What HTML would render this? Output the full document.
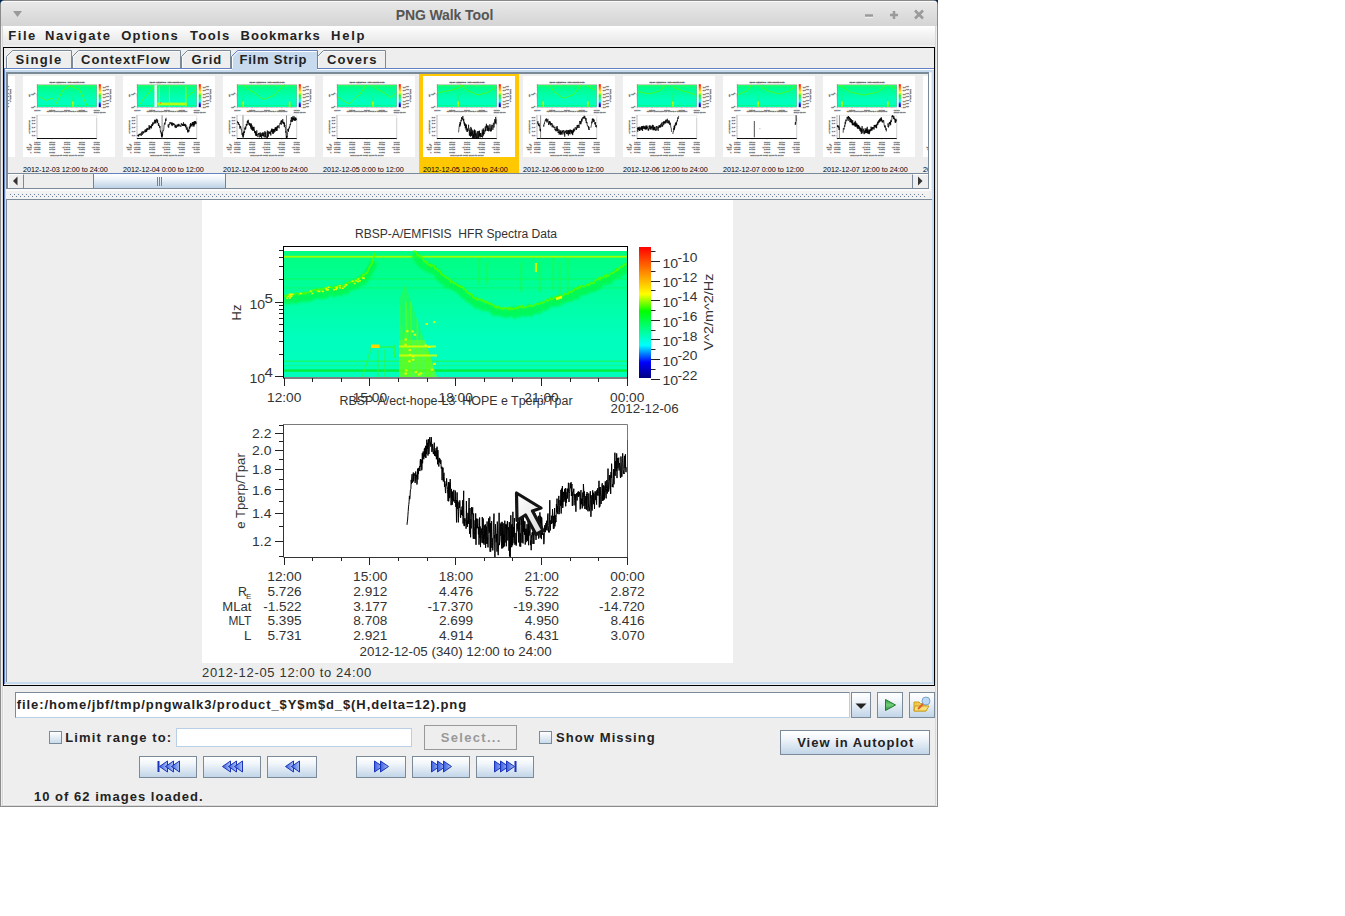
<!DOCTYPE html><html><head><meta charset="utf-8"><title>PNG Walk Tool</title><style>
*{margin:0;padding:0;box-sizing:border-box}
html,body{width:1345px;height:916px;overflow:hidden;background:#fff;position:relative;font-family:"Liberation Sans",sans-serif}
.a{position:absolute}
.b{font-weight:bold;font-size:13px;color:#222;letter-spacing:0.8px;white-space:nowrap;line-height:1}
.pt{font-family:"Liberation Sans",sans-serif;font-size:12px;fill:var(--tf,#333)}
.pts{font-family:"Liberation Sans",sans-serif;font-size:8px;fill:var(--tf,#333)}
.btn{position:absolute;border:1px solid #7a8a99;background:linear-gradient(#fff 0%,#f3f7fb 30%,#c2d5e8 100%)}
.tab{position:absolute;top:50px;height:18px;border:1px solid #7a8a99;border-bottom:none;background:#eee}
</style></head><body>
<div class="a" style="left:0;top:0;width:938px;height:807px;background:#eee;border:1px solid #8c8c8c;border-top-color:#888;border-radius:4px 4px 0 0"></div>
<svg class="a" style="left:0;top:0" width="938" height="6"><path d="M0,0 H4.5 Q0.5,0.5 0,4.5z" fill="#012a52"/><path d="M938,0 H933.5 Q937.5,0.5 938,4.5z" fill="#012a52"/></svg>
<div class="a" style="left:1px;top:1px;width:936px;height:25px;background:linear-gradient(#e8e8e8,#d4d4d4);border-top:1px solid #fafafa;border-radius:3px 3px 0 0"></div>
<div class="a" style="left:2px;top:26px;width:1px;height:779px;background:#d8d8d8"></div>
<div class="a" style="left:3px;top:686px;width:1px;height:118px;background:#f4f4f4"></div>
<div class="a" style="left:2px;top:805px;width:934px;height:1px;background:#d8d8d8"></div>
<div class="a" style="left:3px;top:804px;width:932px;height:1px;background:#f4f4f4"></div>
<div class="a" style="left:935px;top:26px;width:1px;height:779px;background:#d8d8d8"></div>
<svg class="a" style="left:0;top:0" width="938" height="26"><path d="M13,11 L22,11 L17.5,17z" fill="#9a9a9a"/><path d="M865,16.5H873" stroke="#fff" stroke-width="2.5" opacity=".7"/><path d="M865,15.5H873" stroke="#9a9a9a" stroke-width="2.5"/><path d="M890,15H898M894,11V19" stroke="#9a9a9a" stroke-width="2.5"/><path d="M915,10.5L923,18.5M923,10.5L915,18.5" stroke="#9a9a9a" stroke-width="2.5"/></svg>
<div class="a" style="left:395.7px;top:8.3px;font-size:14px;font-weight:bold;color:#555;white-space:nowrap;line-height:14px;letter-spacing:-0.1px">PNG Walk Tool</div>
<div class="a" style="left:3px;top:26px;width:932px;height:19px;background:linear-gradient(#ffffff,#f4f4f4 40%,#e6e6e6)"></div>
<div class="a b" style="left:8.2px;top:29px;letter-spacing:1.57px">File</div>
<div class="a b" style="left:45.1px;top:29px;letter-spacing:1.54px">Navigate</div>
<div class="a b" style="left:121.2px;top:29px;letter-spacing:1.23px">Options</div>
<div class="a b" style="left:190.1px;top:29px;letter-spacing:1.38px">Tools</div>
<div class="a b" style="left:240.6px;top:29px;letter-spacing:1.04px">Bookmarks</div>
<div class="a b" style="left:331.1px;top:29px;letter-spacing:1.73px">Help</div>
<div class="a" style="left:3px;top:47px;width:932px;height:639px;border:1px solid #000;background:#eee"></div>
<svg class="a" style="left:6px;top:49px" width="67" height="20"><path d="M0.5,20 V7.5 L6.5,1.5 H65.5 V20" fill="#eee" stroke="#7a8a99" stroke-width="1"/><path d="M1.5,20 V8 L7,2.5 H64.5" fill="none" stroke="#fafafa" stroke-width="1"/></svg>
<svg class="a" style="left:72px;top:49px" width="110" height="20"><path d="M0.5,20 V7.5 L6.5,1.5 H108.5 V20" fill="#eee" stroke="#7a8a99" stroke-width="1"/><path d="M1.5,20 V8 L7,2.5 H107.5" fill="none" stroke="#fafafa" stroke-width="1"/></svg>
<svg class="a" style="left:181px;top:49px" width="51" height="20"><path d="M0.5,20 V7.5 L6.5,1.5 H49.5 V20" fill="#eee" stroke="#7a8a99" stroke-width="1"/><path d="M1.5,20 V8 L7,2.5 H48.5" fill="none" stroke="#fafafa" stroke-width="1"/></svg>
<svg class="a" style="left:317px;top:49px" width="70" height="20"><path d="M0.5,20 V7.5 L6.5,1.5 H68.5 V20" fill="#eee" stroke="#7a8a99" stroke-width="1"/><path d="M1.5,20 V8 L7,2.5 H67.5" fill="none" stroke="#fafafa" stroke-width="1"/></svg>
<svg class="a" style="left:231px;top:49px" width="87" height="24"><path d="M0.5,24 V7.5 L6.5,1.5 H86.5 V24" fill="#c7daee" stroke="#6382bf" stroke-width="1"/><path d="M1.5,22 V8 L7,2.5 H85.5" fill="none" stroke="#fff" stroke-width="1"/></svg>
<div class="a" style="left:4px;top:68px;width:930px;height:616px;border:1px solid #6382bf;border-right:none;border-bottom:none"></div>
<div class="a" style="left:5px;top:69px;width:929px;height:615px;border:1px solid #fff;border-right:none;border-bottom:none"></div>
<div class="a" style="left:5px;top:70px;width:929px;height:614px;border:2px solid #c7daee;border-left-width:1px;border-top-width:2px"></div>
<div class="a" style="left:232px;top:68px;width:85px;height:4px;background:#c7daee"></div>
<div class="a" style="left:317px;top:68px;width:1px;height:1px;background:#6382bf"></div>
<div class="a b" style="left:15.4px;top:53px;letter-spacing:1.36px">Single</div>
<div class="a b" style="left:81px;top:53px;letter-spacing:1.05px">ContextFlow</div>
<div class="a b" style="left:191.6px;top:53px;letter-spacing:0.97px">Grid</div>
<div class="a b" style="left:239.4px;top:53px;letter-spacing:0.8px">Film Strip</div>
<div class="a b" style="left:327px;top:53px;letter-spacing:1.06px">Covers</div>
<div class="a" style="left:6px;top:72px;width:923px;height:117px;border:2px solid #7a8a99;border-right-width:1px;border-bottom-width:1px;background:#eee"></div>
<div class="a" style="left:8px;top:74px;width:920px;height:99px;overflow:hidden">
<svg class="a" style="left:-85px;top:2px" width="92" height="81" viewBox="202 200 531 463" preserveAspectRatio="none"><use href="#pbase" stroke="#666" stroke-width="2" style="--tf:#555"/><g clip-path="url(#specclip)"><rect x="284" y="255.8" width="343" height="1.8" fill="#9cff00"/>
<rect x="284" y="369.3" width="343" height="2.5" fill="#00f030" opacity=".9"/>
<path d="M284.00,288.8 L288.00,288.5 L292.00,288.1 L296.00,287.7 L300.00,287.3 L304.00,286.9 L308.00,286.4 L312.00,285.8 L316.00,285.3 L320.00,284.7 L324.00,284.1 L328.00,283.5 L332.00,282.9 L336.00,282.2 L340.00,281.5 L344.00,280.8 L348.00,280.1 L352.00,279.4 L356.00,278.7 L360.00,278.0 L364.00,277.3 L368.00,276.5 L372.00,275.8 L376.00,275.1 L380.00,274.3 L384.00,273.6 L388.00,272.9 L392.00,272.2 L396.00,271.5 L400.00,270.8 L404.00,270.1 L408.00,269.5 L412.00,268.8 L416.00,268.2 L420.00,267.6 L424.00,267.0 L428.00,266.5 L432.00,266.0 L436.00,265.5 L440.00,265.0 L444.00,264.6 L448.00,264.2 L452.00,263.9 L456.00,263.6 L460.00,264.0 L464.00,264.3 L468.00,264.7 L472.00,265.1 L476.00,265.6 L480.00,266.1 L484.00,266.6 L488.00,267.2 L492.00,267.8 L496.00,268.4 L500.00,269.0 L504.00,269.6 L508.00,270.3 L512.00,271.0 L516.00,271.6 L520.00,272.3 L524.00,273.1 L528.00,273.8 L532.00,274.5 L536.00,275.2 L540.00,276.0 L544.00,276.7 L548.00,277.4 L552.00,278.2 L556.00,278.9 L560.00,279.6 L564.00,280.3 L568.00,281.0 L572.00,281.7 L576.00,282.4 L580.00,283.0 L584.00,283.7 L588.00,284.3 L592.00,284.9 L596.00,285.4 L600.00,286.0 L604.00,286.5 L608.00,287.0 L612.00,287.4 L616.00,287.8 L620.00,288.2 L624.00,288.6" fill="none" stroke="#60f800" stroke-width="5" stroke-linejoin="round"/>
<path d="M448.5,377 L455.5,301.4 L462.5,377z" fill="#40f020" opacity=".55"/>
<rect x="451.5" y="345" width="9" height="32" fill="#b8ff00" opacity=".8"/>
<rect x="452.5" y="350" width="6" height="8" fill="#f0f000"/></g><use href="#paxes" stroke="#777" stroke-width="2" style="--tf:#555"/><path d="M283,557H627" stroke="#111" stroke-width="6"/><path d="" fill="none" stroke="#777" stroke-width="5"/><path d="" fill="none" stroke="#000" stroke-width="4" clip-path="url(#lineclip)"/></svg>
<div class="a" style="left:-85px;top:92px;font-size:7.2px;color:#000;white-space:nowrap;line-height:1;letter-spacing:0px">2012-12-03 0:00 to 12:00</div>
<svg class="a" style="left:15px;top:2px" width="92" height="81" viewBox="202 200 531 463" preserveAspectRatio="none"><use href="#pbase" stroke="#666" stroke-width="2" style="--tf:#555"/><g clip-path="url(#specclip)"><rect x="284" y="255.8" width="343" height="1.8" fill="#9cff00"/>
<rect x="284" y="369.3" width="343" height="2.5" fill="#00f030" opacity=".9"/>
<path d="M386.90,364.4 L390.90,360.2 L394.90,354.7 L398.90,348.0 L402.90,340.5 L406.90,332.4 L410.90,324.0 L414.90,315.4 L418.90,307.0 L422.90,299.0 L426.90,291.6 L430.90,285.1 L434.90,279.7 L438.90,276.0 L442.90,274.5 L446.90,272.4 L450.90,269.9 L454.90,267.2 L458.90,264.4 L462.90,261.8 L466.90,259.6 L470.90,257.9 L474.90,257.8 L478.90,258.8 L482.90,260.2 L486.90,261.7 L490.90,263.4 L494.90,265.2 L498.90,267.0 L502.90,268.8 L506.90,270.6 L510.90,272.2 L514.90,273.7 L518.90,275.0 L522.90,276.0 L526.90,279.2 L530.90,284.7 L534.90,291.5 L538.90,299.3 L542.90,307.8 L546.90,316.8 L550.90,325.9 L554.90,335.0 L558.90,343.8 L562.90,351.9 L566.90,359.2 L570.90,365.3 L574.90,370.1" fill="none" stroke="#60f800" stroke-width="5" stroke-linejoin="round"/>
<path d="M301.15,320.3 L305.15,321.8 L309.15,323.8 L313.15,326.3 L317.15,329.0 L321.15,331.7 L325.15,334.3 L329.15,336.6 L333.15,338.4 L337.15,338.8 L341.15,337.7 L345.15,336.2 L349.15,334.5 L353.15,332.6 L357.15,330.8 L361.15,329.2 L365.15,327.8 L369.15,326.7 L373.15,329.4 L377.15,334.4 L381.15,339.9 L385.15,344.3" fill="none" stroke="#60f800" stroke-width="5" stroke-linejoin="round"/>
<path d="M482.8,377 L489.8,301.4 L496.8,377z" fill="#40f020" opacity=".55"/>
<rect x="485.8" y="345" width="9" height="32" fill="#b8ff00" opacity=".8"/>
<rect x="486.8" y="350" width="6" height="8" fill="#f0f000"/></g><use href="#paxes" stroke="#777" stroke-width="2" style="--tf:#555"/><path d="M283,557H627" stroke="#111" stroke-width="6"/><path d="" fill="none" stroke="#777" stroke-width="5"/><path d="" fill="none" stroke="#000" stroke-width="4" clip-path="url(#lineclip)"/></svg>
<div class="a" style="left:15px;top:92px;font-size:7.2px;color:#000;white-space:nowrap;line-height:1;letter-spacing:0px">2012-12-03 12:00 to 24:00</div>
<svg class="a" style="left:115px;top:2px" width="92" height="81" viewBox="202 200 531 463" preserveAspectRatio="none"><use href="#pbase" stroke="#666" stroke-width="2" style="--tf:#555"/><g clip-path="url(#specclip)"><rect x="284" y="255.8" width="343" height="1.8" fill="#9cff00"/>
<rect x="284" y="369.3" width="343" height="2.5" fill="#00f030" opacity=".9"/>
<path d="M294.29,364.4 L298.29,361.3 L302.29,357.0 L306.29,351.9 L310.29,346.1 L314.29,340.1 L318.29,334.0 L322.29,328.1 L326.29,322.8 L330.29,318.2 L334.29,314.8 L338.29,312.0 L342.29,308.4 L346.29,303.9 L350.29,298.8 L354.29,293.2 L358.29,287.4 L362.29,281.5 L366.29,275.7 L370.29,270.3 L374.29,265.4 L378.29,261.3 L382.29,258.0" fill="none" stroke="#60f800" stroke-width="5" stroke-linejoin="round"/>
<path d="M558.40,326.6 L562.40,324.7 L566.40,321.9 L570.40,318.6 L574.40,315.1 L578.40,311.4 L582.40,307.9 L586.40,304.8 L590.40,302.4 L594.40,300.7 L598.40,298.4 L602.40,295.4 L606.40,291.9 L610.40,288.3 L614.40,284.7 L618.40,281.3 L622.40,278.5 L626.40,276.4" fill="none" stroke="#60f800" stroke-width="5" stroke-linejoin="round"/>
<rect x="383.5" y="247" width="13.7" height="130" fill="#fff"/>
<rect x="400" y="352" width="170" height="16" fill="#c8ff00" opacity=".9"/>
<rect x="410" y="350" width="12" height="8" fill="#ff8000"/>
<path d="M412,260V377 M470,260V377 M565,260V377" stroke="#a0ff00" stroke-width="6"/></g><use href="#paxes" stroke="#777" stroke-width="2" style="--tf:#555"/><path d="M283,557H627" stroke="#111" stroke-width="6"/><path d=" M427.5,425 V557" fill="none" stroke="#777" stroke-width="5"/><path d="M283.00,537.6 L284.00,541.0 L285.00,538.1 L286.00,537.8 L287.00,537.9 L288.00,537.0 L289.00,541.2 L290.00,538.6 L291.00,545.8 L292.00,535.4 L293.00,544.1 L294.00,532.6 L295.00,531.7 L296.00,530.2 L297.00,534.7 L298.00,531.9 L299.00,537.4 L300.00,534.5 L301.00,536.0 L302.00,538.1 L303.00,530.2 L304.00,529.8 L305.00,528.6 L306.00,527.2 L307.00,542.3 L308.00,530.0 L309.00,523.8 L310.00,525.1 L311.00,518.2 L312.00,531.6 L313.00,536.9 L314.00,528.2 L315.00,527.0 L316.00,521.1 L317.00,515.4 L318.00,529.5 L319.00,524.6 L320.00,517.9 L321.00,526.2 L322.00,525.1 L323.00,521.1 L324.00,523.1 L325.00,521.5 L326.00,513.3 L327.00,513.2 L328.00,516.2 L329.00,516.2 L330.00,506.0 L331.00,521.9 L332.00,513.4 L333.00,517.9 L334.00,504.8 L335.00,509.3 L336.00,515.4 L337.00,520.3 L338.00,504.9 L339.00,516.9 L340.00,498.5 L341.00,496.5 L342.00,509.6 L343.00,501.1 L344.00,499.8 L345.00,505.1 L346.00,500.0 L347.00,508.8 L348.00,502.8 L349.00,498.9 L350.00,495.2 L351.00,493.2 L352.00,490.7 L353.00,480.5 L354.00,500.5 L355.00,491.5 L356.00,506.5 L357.00,496.5 L358.00,486.4 L359.00,498.0 L360.00,486.2 L361.00,488.5 L362.00,493.2 L363.00,485.6 L364.00,493.1 L365.00,482.9 L366.00,499.5 L367.00,493.0 L368.00,479.0 L369.00,474.4 L370.00,484.8 L371.00,478.7 L372.00,485.5 L373.00,465.6 L374.00,473.8 L375.00,480.7 L376.00,471.8 L377.00,470.0 L378.00,470.5 L379.00,472.9 L380.00,464.8 L381.00,471.3 L382.00,472.3 L383.00,457.7 L384.00,456.2 L385.00,450.1 L386.00,469.4 L387.00,453.9 L388.00,467.0 L389.00,452.0 L390.00,458.6 L391.00,469.6 L392.00,471.2 L393.00,453.0 L394.00,444.8 L395.00,449.6 L396.00,449.6 L397.00,461.5 L398.00,455.5 L399.00,447.4 L400.00,466.8 L401.00,468.8 L402.00,452.9 L403.00,467.0 L404.00,468.1 L405.00,473.3 L406.00,480.7 L407.00,485.8 L408.00,469.9 L409.00,482.7 L410.00,485.6 L411.00,481.5 L412.00,483.7 L413.00,496.1 L414.00,490.1 L415.00,492.4 L416.00,487.1 L417.00,505.9 L418.00,518.8 L419.00,513.2 L420.00,524.0 L421.00,526.1 L422.00,528.0 L423.00,523.5 L424.00,546.8 L425.00,547.0 L426.00,523.0 L427.00,549.9 L428.00,540.1 L429.00,532.8 L430.00,542.5 L431.00,518.9 L432.00,513.3 L433.00,513.7 L434.00,514.6 L435.00,509.0 L436.00,510.1 L437.00,508.1 L438.00,496.4 L439.00,480.9 L440.00,478.4 L441.00,471.9 L442.00,466.8 L443.00,477.1 L444.00,474.8 L445.00,475.8 L446.00,468.2 L447.00,463.7 L448.00,445.2 L449.00,450.7 L450.00,457.1 L451.00,438.2 M461.88,492.2 L462.88,477.4 L463.88,483.7 L464.88,491.4 L465.88,495.6 L466.88,482.6 L467.88,475.9 L468.88,480.7 L469.88,471.2 L470.88,468.0 L471.88,465.4 L472.88,464.8 L473.88,472.6 L474.88,472.1 L475.88,473.1 L476.88,463.9 L477.88,465.3 L478.88,466.2 L479.88,470.4 L480.88,478.0 L481.88,468.1 L482.88,471.3 L483.88,480.9 L484.88,464.9 L485.88,486.5 L486.88,475.9 L487.88,470.0 L488.88,471.2 L489.88,477.5 L490.88,472.8 L491.88,469.8 L492.88,474.4 L493.88,479.4 L494.88,471.5 L495.88,480.0 L496.88,481.9 L497.88,476.5 L498.88,475.6 L499.88,473.9 L500.88,482.6 L501.88,493.9 L502.88,484.3 L503.88,484.8 L504.88,489.6 L505.88,479.4 L506.88,497.8 L507.88,485.7 L508.88,488.9 L509.88,488.7 L510.88,495.5 L511.88,490.6 L512.88,480.3 L513.88,478.4 L514.88,487.7 L515.88,477.9 L516.88,477.0 L517.88,479.0 L518.88,490.2 L519.88,481.1 L520.88,486.0 L521.88,485.3 L522.88,475.6 L523.88,486.4 L524.88,473.3 L525.88,475.7 L526.88,487.7 L527.88,486.7 L528.88,484.9 L529.88,486.0 L530.88,484.5 L531.88,480.2 L532.88,484.0 L533.88,484.6 L534.88,485.9 L535.88,490.8 L536.88,485.7 L537.88,473.4 L538.88,469.7 L539.88,476.6 L540.88,477.1 L541.88,480.5 L542.88,475.6 L543.88,482.9 L544.88,485.8 L545.88,475.4 L546.88,481.3 L547.88,475.9 L548.88,485.3 L549.88,470.2 L550.88,464.4 L551.88,486.0 L552.88,482.5 L553.88,477.6 L554.88,478.3 L555.88,483.8 L556.88,473.7 L557.88,486.2 L558.88,485.7 L559.88,475.0 L560.88,473.6 L561.88,476.7 L562.88,493.0 L563.88,477.8 L564.88,486.2 L565.88,482.7 L566.88,496.8 L567.88,507.4 L568.88,504.2 L569.88,495.4 L570.88,489.7 L571.88,499.2 L572.88,497.3 L573.88,496.6 L574.88,517.8 L575.88,508.5 L576.88,523.6 L577.88,505.0 L578.88,515.6 L579.88,511.7 L580.88,516.3 L581.88,510.8 L582.88,517.5 L583.88,500.2 L584.88,488.9 L585.88,501.3 L586.88,491.6 L587.88,499.5 L588.88,497.0 L589.88,475.6 L590.88,492.1 L591.88,469.3 L592.88,480.5 L593.88,474.2 L594.88,480.3 L595.88,483.1 L596.88,477.2 L597.88,488.0 L598.88,483.2 L599.88,472.0 L600.88,480.0 L601.88,464.6 L602.88,475.7 L603.88,480.8 L604.88,463.7 L605.88,488.8 L606.88,482.3 L607.88,463.3 L608.88,465.8 L609.88,482.4 L610.88,462.0 L611.88,488.8 L612.88,464.5 L613.88,458.6 L614.88,465.4 L615.88,479.5 L616.88,459.7 L617.88,465.5 L618.88,469.9 L619.88,458.0 L620.88,472.2 L621.88,466.8 L622.88,471.4 L623.88,461.2 L624.88,465.1 L625.88,467.5 L626.88,475.7" fill="none" stroke="#000" stroke-width="4" clip-path="url(#lineclip)"/></svg>
<div class="a" style="left:115px;top:92px;font-size:7.2px;color:#000;white-space:nowrap;line-height:1;letter-spacing:0px">2012-12-04 0:00 to 12:00</div>
<svg class="a" style="left:215px;top:2px" width="92" height="81" viewBox="202 200 531 463" preserveAspectRatio="none"><use href="#pbase" stroke="#666" stroke-width="2" style="--tf:#555"/><g clip-path="url(#specclip)"><rect x="284" y="255.8" width="343" height="1.8" fill="#9cff00"/>
<rect x="284" y="369.3" width="343" height="2.5" fill="#00f030" opacity=".9"/>
<path d="M318.30,251.0 L322.30,252.8 L326.30,255.2 L330.30,258.0 L334.30,261.2 L338.30,264.7 L342.30,268.3 L346.30,272.0 L350.30,275.6 L354.30,279.0 L358.30,282.2 L362.30,285.0 L366.30,287.3 L370.30,289.0 L374.30,290.5 L378.30,292.5 L382.30,294.8 L386.30,297.4 L390.30,300.2 L394.30,303.1 L398.30,306.3 L402.30,309.4 L406.30,312.7 L410.30,315.8 L414.30,318.9 L418.30,321.9 L422.30,324.7 L426.30,327.2 L430.30,329.5 L434.30,331.4 L438.30,332.9 L442.30,332.0 L446.30,330.8 L450.30,329.4 L454.30,327.8 L458.30,326.1 L462.30,324.3 L466.30,322.4 L470.30,320.6 L474.30,318.9 L478.30,317.3 L482.30,315.9 L486.30,314.8 L490.30,313.8 L494.30,311.5 L498.30,308.8 L502.30,305.5 L506.30,301.8 L510.30,297.8 L514.30,293.6 L518.30,289.1 L522.30,284.6 L526.30,280.0 L530.30,275.4 L534.30,271.0 L538.30,266.8 L542.30,262.8 L546.30,259.2 L550.30,255.9 L554.30,253.2 L558.30,251.0" fill="none" stroke="#60f800" stroke-width="5" stroke-linejoin="round"/>
<path d="M311.3,377 L318.3,288.8 L325.3,377z" fill="#40f020" opacity=".55"/>
<rect x="314.3" y="345" width="9" height="32" fill="#b8ff00" opacity=".8"/>
<rect x="315.3" y="350" width="6" height="8" fill="#f0f000"/>
<path d="M578.8,377 L585.8,314.0 L592.8,377z" fill="#40f020" opacity=".55"/>
<rect x="581.8" y="345" width="9" height="32" fill="#b8ff00" opacity=".8"/>
<rect x="582.8" y="350" width="6" height="8" fill="#f0f000"/></g><use href="#paxes" stroke="#777" stroke-width="2" style="--tf:#555"/><path d="M283,557H627" stroke="#111" stroke-width="6"/><path d=" M317.4,425 V557 M568.5,425 V557" fill="none" stroke="#777" stroke-width="5"/><path d="M283.00,464.8 L284.00,456.6 L285.00,458.6 L286.00,468.7 L287.00,464.5 L288.00,463.7 L289.00,464.8 L290.00,477.4 L291.00,464.1 L292.00,465.4 L293.00,473.4 L294.00,479.9 L295.00,480.3 L296.00,480.2 L297.00,475.5 L298.00,492.4 L299.00,492.7 L300.00,501.3 L301.00,484.6 L302.00,486.9 L303.00,495.3 L304.00,488.5 L305.00,495.8 L306.00,495.3 L307.00,506.4 L308.00,503.9 L309.00,508.2 L310.00,520.3 L311.00,533.3 L312.00,536.8 L313.00,535.9 L314.00,525.4 L315.00,527.6 L316.00,545.4 L317.00,537.9 L318.00,535.5 L319.00,551.0 L320.00,521.6 L321.00,532.0 L322.00,538.4 L323.00,514.0 L324.00,517.4 L325.00,520.3 L326.00,525.9 L327.00,512.7 L328.00,496.0 L329.00,507.1 L330.00,496.1 L331.00,488.9 L332.00,500.6 L333.00,503.8 L334.00,496.5 L335.00,496.5 L336.00,474.5 L337.00,479.0 L338.00,477.6 L339.00,485.6 L340.00,473.7 L341.00,479.8 L342.00,459.1 L343.00,467.9 L344.00,462.5 L345.00,455.0 L346.00,470.9 L347.00,454.6 L348.00,450.5 L349.00,464.7 L350.00,470.1 L351.00,466.3 L352.00,478.9 L353.00,471.3 L354.00,477.7 L355.00,469.6 L356.00,481.9 L357.00,470.9 L358.00,485.1 L359.00,476.8 L360.00,478.3 L361.00,493.5 L362.00,491.5 L363.00,470.7 L364.00,503.2 L365.00,473.3 L366.00,487.7 L367.00,488.2 L368.00,507.2 L369.00,507.9 L370.00,482.7 L371.00,509.8 L372.00,511.6 L373.00,492.1 L374.00,492.4 L375.00,491.9 L376.00,513.6 L377.00,491.3 L378.00,507.2 L379.00,507.1 L380.00,510.9 L381.00,490.3 L382.00,512.3 L383.00,507.7 L384.00,525.3 L385.00,524.4 L386.00,514.8 L387.00,522.4 L388.00,516.3 L389.00,534.5 L390.00,515.5 L391.00,530.5 L392.00,542.1 L393.00,522.9 L394.00,540.7 L395.00,532.3 L396.00,543.6 L397.00,510.6 L398.00,538.2 L399.00,534.2 L400.00,531.8 L401.00,539.8 L402.00,543.0 L403.00,549.1 L404.00,548.0 L405.00,542.4 L406.00,535.0 L407.00,527.5 L408.00,535.3 L409.00,529.7 L410.00,532.5 L411.00,525.0 L412.00,551.4 L413.00,549.9 L414.00,547.1 L415.00,544.6 L416.00,529.6 L417.00,522.8 L418.00,548.6 L419.00,531.9 L420.00,545.2 L421.00,545.8 L422.00,525.3 L423.00,531.5 L424.00,533.1 L425.00,560.6 L426.00,538.0 L427.00,538.2 L428.00,534.3 L429.00,542.7 L430.00,524.8 L431.00,530.7 L432.00,522.6 L433.00,543.5 L434.00,527.4 L435.00,542.6 L436.00,544.4 L437.00,529.6 L438.00,523.0 L439.00,528.4 L440.00,550.9 L441.00,539.8 L442.00,540.0 L443.00,527.1 L444.00,515.1 L445.00,530.0 L446.00,525.5 L447.00,551.0 L448.00,530.3 L449.00,520.7 L450.00,531.2 L451.00,542.7 L452.00,548.6 L453.00,549.9 L454.00,553.9 L455.00,546.8 L456.00,547.3 L457.00,541.4 L458.00,511.4 L459.00,555.7 L460.00,539.7 L461.00,542.5 L462.00,516.4 L463.00,547.3 L464.00,537.1 L465.00,518.7 L466.00,517.7 L467.00,520.3 L468.00,526.2 L469.00,519.2 L470.00,521.7 L471.00,529.0 L472.00,520.3 L473.00,520.6 L474.00,533.0 L475.00,516.7 L476.00,521.2 L477.00,527.5 L478.00,539.9 L479.00,526.7 L480.00,509.6 L481.00,518.2 L482.00,519.4 L483.00,501.7 L484.00,518.4 L485.00,511.8 L486.00,501.5 L487.00,514.3 L488.00,528.8 L489.00,506.3 L490.00,523.1 L491.00,525.8 L492.00,531.2 L493.00,526.4 L494.00,503.6 L495.00,523.1 L496.00,503.0 L497.00,522.9 L498.00,521.3 L499.00,509.7 L500.00,502.9 L501.00,503.4 L502.00,519.8 L503.00,494.3 L504.00,509.9 L505.00,494.1 L506.00,510.0 L507.00,497.2 L508.00,504.9 L509.00,493.3 L510.00,510.8 L511.00,507.8 L512.00,514.3 L513.00,491.6 L514.00,512.3 L515.00,485.3 L516.00,493.0 L517.00,487.7 L518.00,495.6 L519.00,490.9 L520.00,481.8 L521.00,486.1 L522.00,491.6 L523.00,490.7 L524.00,492.9 L525.00,496.5 L526.00,498.8 L527.00,481.0 L528.00,481.5 L529.00,480.3 L530.00,471.8 L531.00,472.9 L532.00,467.5 L533.00,471.0 L534.00,475.4 L535.00,464.4 L536.00,462.0 L537.00,455.5 L538.00,466.8 L539.00,478.5 L540.00,453.2 L541.00,463.1 L542.00,457.9 L543.00,462.1 L544.00,467.4 L545.00,467.1 L546.00,449.2 L547.00,445.7 L548.00,457.0 L549.00,473.1 L550.00,463.1 L551.00,474.1 L552.00,471.7 L553.00,462.1 L554.00,475.3 L555.00,479.9 L556.00,491.6 L557.00,467.1 L558.00,479.6 L559.00,484.8 L560.00,480.7 L561.00,494.3 L562.00,492.1 L563.00,513.5 L564.00,523.5 L565.00,516.2 L566.00,540.3 L567.00,549.1 L568.00,559.8 L569.00,542.7 L570.00,558.7 L571.00,542.1 L572.00,551.0 L573.00,543.3 L574.00,537.6 L575.00,520.6 L576.00,518.5 L577.00,502.4 L578.00,514.4 L579.00,502.6 L580.00,518.2 L581.00,501.0 L582.00,498.2 L583.00,496.6 L584.00,500.8 L585.00,489.1 L586.00,495.7 L587.00,490.8 L588.00,489.3 L589.00,475.2 L590.00,473.7 L591.00,480.8 L592.00,477.2 L593.00,468.7 L594.00,451.0 L595.00,462.1 L596.00,438.0 L597.00,443.2 L598.00,436.6 L599.00,439.8 L600.00,461.6 L601.00,436.0 L602.00,461.3 L603.00,441.0 L604.00,440.9 L605.00,444.5 L606.00,429.1 L607.00,433.3 L608.00,448.4 L609.00,441.0 L610.00,451.2 L611.00,446.3 L612.00,456.0 L613.00,431.0 L614.00,451.6 L615.00,452.4 L616.00,454.4 L617.00,439.8 L618.00,442.1 L619.00,455.4 L620.00,439.5 L621.00,452.9 L622.00,436.6 L623.00,452.9 L624.00,453.0 L625.00,445.2 L626.00,451.2 L627.00,440.6" fill="none" stroke="#000" stroke-width="4" clip-path="url(#lineclip)"/></svg>
<div class="a" style="left:215px;top:92px;font-size:7.2px;color:#000;white-space:nowrap;line-height:1;letter-spacing:0px">2012-12-04 12:00 to 24:00</div>
<svg class="a" style="left:315px;top:2px" width="92" height="81" viewBox="202 200 531 463" preserveAspectRatio="none"><use href="#pbase" stroke="#666" stroke-width="2" style="--tf:#555"/><g clip-path="url(#specclip)"><rect x="284" y="255.8" width="343" height="1.8" fill="#9cff00"/>
<rect x="284" y="369.3" width="343" height="2.5" fill="#00f030" opacity=".9"/>
<path d="M284.00,320.3 L288.00,321.6 L292.00,323.2 L296.00,325.1 L300.00,327.3 L304.00,329.7 L308.00,332.2 L312.00,334.9 L316.00,337.6 L320.00,340.4 L324.00,343.1 L328.00,345.8 L332.00,348.3 L336.00,350.7 L340.00,352.9 L344.00,354.9 L348.00,356.6 L352.00,357.9 L356.00,356.4 L360.00,353.7 L364.00,350.4 L368.00,346.8 L372.00,342.7 L376.00,338.5 L380.00,334.3 L384.00,330.0 L388.00,326.0 L392.00,322.2 L396.00,318.9 L400.00,316.1 L404.00,314.0 L408.00,311.1 L412.00,307.1 L416.00,302.4 L420.00,297.0 L424.00,291.3 L428.00,285.2 L432.00,279.1 L436.00,273.1 L440.00,267.3 L444.00,262.1 L448.00,257.4 L452.00,253.6" fill="none" stroke="#60f800" stroke-width="5" stroke-linejoin="round"/>
<path d="M489.80,257.3 L493.80,258.8 L497.80,260.8 L501.80,263.1 L505.80,265.8 L509.80,268.7 L513.80,271.7 L517.80,274.8 L521.80,277.8 L525.80,280.7 L529.80,283.3 L533.80,285.6 L537.80,287.5 L541.80,289.0 L545.80,290.5 L549.80,292.6 L553.80,295.0 L557.80,297.7 L561.80,300.6 L565.80,303.7 L569.80,306.7 L573.80,309.7 L577.80,312.5 L581.80,315.1 L585.80,317.4 L589.80,319.3 L593.80,319.9 L597.80,317.7 L601.80,314.8 L605.80,311.4 L609.80,307.7 L613.80,304.1 L617.80,300.7 L621.80,297.8 L625.80,295.6" fill="none" stroke="#60f800" stroke-width="5" stroke-linejoin="round"/>
<path d="M482.8,377 L489.8,314.0 L496.8,377z" fill="#40f020" opacity=".55"/>
<rect x="485.8" y="345" width="9" height="32" fill="#b8ff00" opacity=".8"/>
<rect x="486.8" y="350" width="6" height="8" fill="#f0f000"/></g><use href="#paxes" stroke="#777" stroke-width="2" style="--tf:#555"/><path d="M283,557H627" stroke="#111" stroke-width="6"/><path d="" fill="none" stroke="#777" stroke-width="5"/><path d="" fill="none" stroke="#000" stroke-width="4" clip-path="url(#lineclip)"/></svg>
<div class="a" style="left:315px;top:92px;font-size:7.2px;color:#000;white-space:nowrap;line-height:1;letter-spacing:0px">2012-12-05 0:00 to 12:00</div>
<div class="a" style="left:411px;top:0;width:100px;height:99px;background:#ffc800"></div>
<svg class="a" style="left:415px;top:2px" width="92" height="81" viewBox="202 200 531 463" preserveAspectRatio="none"><use href="#pbase" stroke="#666" stroke-width="2" style="--tf:#555"/><g clip-path="url(#specclip)"><rect x="284" y="255.8" width="343" height="1.8" fill="#9cff00"/>
<rect x="284" y="369.3" width="343" height="2.5" fill="#00f030" opacity=".9"/>
<path d="M284.00,296.4 L288.00,295.9 L292.00,295.4 L296.00,294.7 L300.00,294.0 L304.00,293.2 L308.00,292.4 L312.00,291.5 L316.00,290.6 L320.00,289.7 L324.00,288.8 L328.00,287.9 L332.00,287.0 L336.00,286.2 L340.00,285.5 L344.00,284.8 L348.00,284.3 L352.00,283.8 L356.00,283.2 L360.00,282.4 L364.00,281.3 L368.00,280.2 L372.00,278.9 L376.00,277.6 L380.00,276.2 L384.00,274.8 L388.00,273.3 L392.00,271.9 L396.00,270.6 L400.00,269.4 L404.00,268.3 L408.00,267.3 L412.00,266.5 L416.00,265.4 L420.00,262.6 L424.00,259.1 L428.00,255.5 L432.00,252.5" fill="none" stroke="#60f800" stroke-width="5" stroke-linejoin="round"/>
<path d="M414.34,251.0 L418.34,252.6 L422.34,254.6 L426.34,257.0 L430.34,259.7 L434.34,262.6 L438.34,265.7 L442.34,269.0 L446.34,272.2 L450.34,275.4 L454.34,278.4 L458.34,281.3 L462.34,283.9 L466.34,286.1 L470.34,288.0 L474.34,289.2 L478.34,290.4 L482.34,292.0 L486.34,293.8 L490.34,295.8 L494.34,297.9 L498.34,300.0 L502.34,302.1 L506.34,304.0 L510.34,305.6 L514.34,307.0 L518.34,307.6 L522.34,307.0 L526.34,306.3 L530.34,305.4 L534.34,304.4 L538.34,303.4 L542.34,302.4 L546.34,301.3 L550.34,300.3 L554.34,299.4 L558.34,298.6 L562.34,298.0 L566.34,297.3 L570.34,295.9 L574.34,294.1 L578.34,292.0 L582.34,289.7 L586.34,287.2 L590.34,284.6 L594.34,281.8 L598.34,279.1 L602.34,276.4 L606.34,273.7 L610.34,271.2 L614.34,268.9 L618.34,266.9 L622.34,265.2 L626.34,263.8" fill="none" stroke="#60f800" stroke-width="5" stroke-linejoin="round"/>
<path d="M397.1,377 L404.1,283.8 L411.1,377z" fill="#40f020" opacity=".55"/>
<rect x="400.1" y="345" width="9" height="32" fill="#b8ff00" opacity=".8"/>
<rect x="401.1" y="350" width="6" height="8" fill="#f0f000"/></g><use href="#paxes" stroke="#777" stroke-width="2" style="--tf:#555"/><path d="M283,557H627" stroke="#111" stroke-width="6"/><path d="" fill="none" stroke="#777" stroke-width="5"/><path d="M407.00,522.3 L408.00,515.8 L409.00,505.2 L410.00,493.5 L411.00,488.0 L412.00,482.7 L413.00,475.9 L414.00,490.5 L415.00,485.8 L416.00,463.1 L417.00,482.6 L418.00,467.3 L419.00,475.3 L420.00,463.7 L421.00,452.4 L422.00,450.4 L423.00,459.0 L424.00,446.1 L425.00,434.6 L426.00,446.4 L427.00,440.7 L428.00,445.6 L429.00,445.0 L430.00,442.5 L431.00,447.7 L432.00,428.6 L433.00,452.7 L434.00,446.5 L435.00,449.4 L436.00,459.1 L437.00,445.0 L438.00,461.1 L439.00,471.5 L440.00,461.4 L441.00,481.5 L442.00,470.1 L443.00,476.2 L444.00,485.8 L445.00,471.3 L446.00,498.7 L447.00,493.3 L448.00,485.8 L449.00,494.4 L450.00,474.6 L451.00,510.3 L452.00,480.1 L453.00,498.5 L454.00,495.6 L455.00,496.4 L456.00,519.5 L457.00,503.0 L458.00,500.6 L459.00,518.1 L460.00,502.8 L461.00,504.1 L462.00,513.1 L463.00,505.6 L464.00,499.1 L465.00,478.6 L466.00,496.0 L467.00,501.1 L468.00,498.5 L469.00,531.3 L470.00,541.4 L471.00,526.3 L472.00,505.9 L473.00,521.1 L474.00,539.1 L475.00,518.3 L476.00,546.6 L477.00,533.9 L478.00,491.1 L479.00,498.9 L480.00,542.1 L481.00,498.9 L482.00,516.6 L483.00,542.0 L484.00,526.3 L485.00,530.4 L486.00,521.6 L487.00,558.9 L488.00,553.0 L489.00,507.6 L490.00,528.1 L491.00,513.4 L492.00,551.8 L493.00,533.1 L494.00,540.2 L495.00,556.0 L496.00,528.2 L497.00,559.4 L498.00,558.1 L499.00,505.8 L500.00,531.0 L501.00,511.5 L502.00,551.3 L503.00,511.1 L504.00,531.7 L505.00,539.4 L506.00,530.9 L507.00,558.6 L508.00,541.0 L509.00,528.6 L510.00,555.2 L511.00,549.0 L512.00,558.8 L513.00,525.0 L514.00,522.0 L515.00,516.8 L516.00,532.7 L517.00,567.6 L518.00,553.6 L519.00,516.0 L520.00,536.2 L521.00,536.7 L522.00,567.8 L523.00,554.9 L524.00,514.0 L525.00,549.9 L526.00,542.9 L527.00,542.9 L528.00,512.8 L529.00,542.1 L530.00,538.7 L531.00,525.4 L532.00,551.6 L533.00,527.8 L534.00,545.0 L535.00,529.0 L536.00,526.1 L537.00,527.9 L538.00,547.8 L539.00,541.8 L540.00,548.8 L541.00,544.6 L542.00,532.4 L543.00,515.7 L544.00,506.4 L545.00,508.2 L546.00,551.5 L547.00,522.0 L548.00,531.1 L549.00,515.2 L550.00,499.5 L551.00,540.5 L552.00,507.0 L553.00,507.6 L554.00,533.0 L555.00,525.6 L556.00,528.2 L557.00,525.7 L558.00,525.7 L559.00,511.4 L560.00,517.8 L561.00,489.9 L562.00,513.8 L563.00,510.2 L564.00,498.7 L565.00,514.4 L566.00,484.3 L567.00,496.4 L568.00,473.0 L569.00,490.6 L570.00,483.0 L571.00,493.8 L572.00,498.3 L573.00,507.7 L574.00,511.6 L575.00,484.0 L576.00,514.3 L577.00,500.6 L578.00,483.1 L579.00,486.8 L580.00,504.8 L581.00,516.3 L582.00,495.9 L583.00,505.8 L584.00,514.1 L585.00,496.7 L586.00,494.8 L587.00,493.0 L588.00,475.8 L589.00,503.4 L590.00,501.6 L591.00,512.6 L592.00,506.8 L593.00,517.2 L594.00,512.3 L595.00,483.4 L596.00,515.5 L597.00,502.6 L598.00,494.8 L599.00,500.0 L600.00,478.7 L601.00,483.6 L602.00,479.9 L603.00,484.8 L604.00,492.9 L605.00,508.1 L606.00,501.8 L607.00,499.3 L608.00,470.3 L609.00,467.2 L610.00,474.0 L611.00,494.3 L612.00,494.7 L613.00,484.8 L614.00,482.1 L615.00,466.4 L616.00,454.2 L617.00,446.4 L618.00,471.0 L619.00,453.9 L620.00,469.4 L621.00,462.6 L622.00,433.7 L623.00,461.8 L624.00,474.0 L625.00,476.0 L626.00,447.5" fill="none" stroke="#000" stroke-width="4" clip-path="url(#lineclip)"/></svg>
<div class="a" style="left:415px;top:92px;font-size:7.2px;color:#000;white-space:nowrap;line-height:1;letter-spacing:0px">2012-12-05 12:00 to 24:00</div>
<svg class="a" style="left:515px;top:2px" width="92" height="81" viewBox="202 200 531 463" preserveAspectRatio="none"><use href="#pbase" stroke="#666" stroke-width="2" style="--tf:#555"/><g clip-path="url(#specclip)"><rect x="284" y="255.8" width="343" height="1.8" fill="#9cff00"/>
<rect x="284" y="369.3" width="343" height="2.5" fill="#00f030" opacity=".9"/>
<path d="M352.60,251.0 L356.60,254.4 L360.60,259.2 L364.60,264.9 L368.60,271.2 L372.60,277.6 L376.60,283.7 L380.60,289.1 L384.60,293.3 L388.60,295.7 L392.60,297.4 L396.60,299.5 L400.60,302.0 L404.60,304.8 L408.60,307.8 L412.60,310.8 L416.60,313.9 L420.60,316.8 L424.60,319.6 L428.60,322.1 L432.60,324.3 L436.60,326.0 L440.60,326.1 L444.60,325.1 L448.60,323.7 L452.60,322.2 L456.60,320.5 L460.60,318.7 L464.60,316.9 L468.60,315.1 L472.60,313.3 L476.60,311.7 L480.60,310.2 L484.60,308.9 L488.60,307.9 L492.60,305.9 L496.60,302.6 L500.60,298.5 L504.60,293.9 L508.60,288.8 L512.60,283.4 L516.60,277.9 L520.60,272.4 L524.60,267.2 L528.60,262.3 L532.60,257.9 L536.60,254.2 L540.60,251.4" fill="none" stroke="#60f800" stroke-width="5" stroke-linejoin="round"/>
<path d="M575.55,257.3 L579.55,258.5 L583.55,260.1 L587.55,262.0 L591.55,264.1 L595.55,266.4 L599.55,268.8 L603.55,271.3 L607.55,273.7 L611.55,276.0 L615.55,278.1 L619.55,280.0 L623.55,281.5" fill="none" stroke="#60f800" stroke-width="5" stroke-linejoin="round"/>
<path d="M311.3,377 L318.3,301.4 L325.3,377z" fill="#40f020" opacity=".55"/>
<rect x="314.3" y="345" width="9" height="32" fill="#b8ff00" opacity=".8"/>
<rect x="315.3" y="350" width="6" height="8" fill="#f0f000"/>
<path d="M568.5,377 L575.5,301.4 L582.5,377z" fill="#40f020" opacity=".55"/>
<rect x="571.5" y="345" width="9" height="32" fill="#b8ff00" opacity=".8"/>
<rect x="572.5" y="350" width="6" height="8" fill="#f0f000"/></g><use href="#paxes" stroke="#777" stroke-width="2" style="--tf:#555"/><path d="M283,557H627" stroke="#111" stroke-width="6"/><path d=" M303.6,425 V557" fill="none" stroke="#777" stroke-width="5"/><path d="M283.00,459.0 L284.00,469.2 L285.00,473.3 L286.00,465.9 L287.00,464.7 L288.00,458.8 L289.00,467.2 L290.00,480.9 L291.00,482.3 L292.00,473.4 L293.00,482.8 L294.00,470.7 L295.00,480.6 L296.00,487.7 L297.00,479.9 L298.00,490.5 L299.00,496.9 L300.00,500.8 L301.00,513.3 L302.00,502.4 L303.00,518.0 M320.84,478.7 L321.84,489.5 L322.84,482.0 L323.84,472.8 L324.84,472.4 L325.84,474.7 L326.84,462.7 L327.84,463.2 L328.84,461.2 L329.84,453.3 L330.84,453.0 L331.84,450.4 L332.84,449.1 L333.84,457.9 L334.84,445.8 L335.84,450.7 L336.84,442.3 L337.84,446.7 L338.84,459.2 L339.84,455.1 L340.84,465.8 L341.84,450.8 L342.84,455.6 L343.84,449.2 L344.84,448.4 L345.84,445.0 L346.84,457.9 L347.84,461.6 L348.84,466.5 L349.84,480.3 L350.84,463.7 L351.84,461.2 L352.84,458.2 L353.84,462.0 L354.84,468.2 L355.84,458.5 L356.84,477.3 L357.84,459.7 L358.84,469.8 L359.84,466.3 L360.84,467.5 L361.84,482.5 L362.84,469.5 L363.84,478.1 L364.84,474.3 L365.84,470.6 L366.84,476.9 L367.84,476.2 L368.84,469.3 L369.84,492.4 L370.84,486.9 L371.84,482.8 L372.84,477.3 L373.84,490.9 L374.84,493.3 L375.84,493.2 L376.84,489.8 L377.84,492.8 L378.84,491.2 L379.84,483.5 L380.84,497.9 L381.84,497.2 L382.84,496.9 L383.84,494.3 L384.84,498.1 L385.84,493.5 L386.84,509.4 L387.84,504.6 L388.84,503.3 L389.84,510.2 L390.84,505.6 L391.84,515.7 L392.84,509.7 L393.84,489.0 L394.84,501.0 L395.84,508.5 L396.84,514.0 L397.84,515.9 L398.84,493.3 L399.84,487.0 L400.84,513.8 L401.84,499.6 L402.84,503.8 L403.84,522.1 L404.84,525.5 L405.84,521.1 L406.84,525.7 L407.84,521.2 L408.84,504.0 L409.84,518.0 L410.84,535.0 L411.84,523.9 L412.84,527.3 L413.84,511.0 L414.84,514.2 L415.84,530.9 L416.84,527.6 L417.84,514.3 L418.84,536.4 L419.84,523.7 L420.84,509.6 L421.84,531.1 L422.84,519.5 L423.84,519.2 L424.84,528.5 L425.84,525.0 L426.84,536.2 L427.84,524.0 L428.84,514.7 L429.84,519.4 L430.84,511.7 L431.84,527.8 L432.84,520.1 L433.84,515.3 L434.84,508.9 L435.84,516.4 L436.84,525.3 L437.84,530.1 L438.84,532.0 L439.84,534.6 L440.84,529.1 L441.84,521.9 L442.84,546.7 L443.84,511.9 L444.84,524.2 L445.84,515.4 L446.84,518.1 L447.84,514.3 L448.84,514.5 L449.84,524.9 L450.84,523.9 L451.84,509.4 L452.84,508.5 L453.84,531.7 L454.84,524.9 L455.84,532.0 L456.84,530.3 L457.84,525.6 L458.84,519.5 L459.84,510.4 L460.84,532.4 L461.84,524.2 L462.84,511.1 L463.84,540.4 L464.84,509.9 L465.84,510.0 L466.84,521.4 L467.84,515.8 L468.84,517.6 L469.84,531.6 L470.84,507.7 L471.84,512.5 L472.84,525.7 L473.84,533.6 L474.84,507.1 L475.84,517.2 L476.84,516.4 L477.84,507.6 L478.84,519.2 L479.84,517.0 L480.84,527.2 L481.84,509.7 L482.84,528.4 L483.84,522.1 L484.84,516.7 L485.84,510.9 L486.84,533.4 L487.84,513.9 L488.84,538.0 L489.84,520.1 L490.84,525.0 L491.84,506.4 L492.84,520.3 L493.84,506.8 L494.84,517.3 L495.84,500.6 L496.84,507.2 L497.84,503.7 L498.84,513.6 L499.84,515.4 L500.84,508.4 L501.84,496.9 L502.84,494.7 L503.84,492.5 L504.84,497.3 L505.84,498.9 L506.84,496.8 L507.84,499.5 L508.84,508.6 L509.84,495.1 L510.84,506.1 L511.84,497.6 L512.84,490.7 L513.84,483.6 L514.84,480.7 L515.84,498.3 L516.84,487.7 L517.84,479.7 L518.84,487.6 L519.84,495.9 L520.84,480.0 L521.84,481.9 L522.84,483.2 L523.84,479.6 L524.84,490.5 L525.84,497.1 L526.84,476.2 L527.84,468.6 L528.84,469.3 L529.84,457.9 L530.84,463.5 L531.84,456.8 L532.84,470.3 L533.84,474.6 L534.84,460.6 L535.84,476.4 L536.84,471.2 L537.84,470.3 L538.84,461.6 L539.84,443.9 L540.84,461.5 L541.84,460.9 L542.84,454.7 L543.84,451.8 L544.84,452.7 L545.84,444.3 L546.84,438.4 L547.84,444.0 L548.84,434.4 L549.84,439.4 L550.84,434.8 L551.84,442.1 L552.84,441.7 L553.84,440.2 L554.84,426.6 L555.84,434.0 L556.84,442.3 L557.84,441.0 L558.84,430.1 L559.84,434.0 L560.84,446.0 L561.84,444.3 L562.84,440.1 L563.84,443.0 L564.84,456.1 L565.84,441.1 L566.84,467.8 L567.84,460.1 L568.84,468.2 L569.84,469.8 L570.84,470.6 L571.84,464.9 L572.84,483.0 L573.84,485.4 L574.84,483.7 L575.84,483.2 L576.84,489.7 L577.84,491.6 L578.84,493.2 L579.84,486.9 L580.84,501.3 L581.84,506.3 L582.84,490.7 L583.84,507.4 L584.84,502.8 M592.60,496.5 L593.60,494.6 L594.60,492.4 L595.60,486.4 L596.60,480.8 L597.60,476.9 L598.60,461.4 L599.60,461.1 L600.60,469.8 L601.60,446.3 L602.60,443.0 L603.60,452.6 L604.60,446.0 L605.60,462.0 L606.60,463.2 L607.60,445.6 L608.60,444.2 L609.60,461.7 L610.60,456.9 L611.60,449.1 L612.60,452.0 L613.60,451.1 L614.60,460.9 L615.60,464.1 L616.60,472.8 L617.60,467.9 L618.60,478.4 L619.60,463.8 L620.60,479.7 L621.60,481.4 L622.60,490.5 L623.60,482.7 L624.60,491.8 L625.60,480.0 L626.60,496.6" fill="none" stroke="#000" stroke-width="4" clip-path="url(#lineclip)"/></svg>
<div class="a" style="left:515px;top:92px;font-size:7.2px;color:#000;white-space:nowrap;line-height:1;letter-spacing:0px">2012-12-06 0:00 to 12:00</div>
<svg class="a" style="left:615px;top:2px" width="92" height="81" viewBox="202 200 531 463" preserveAspectRatio="none"><use href="#pbase" stroke="#666" stroke-width="2" style="--tf:#555"/><g clip-path="url(#specclip)"><rect x="284" y="255.8" width="343" height="1.8" fill="#9cff00"/>
<rect x="284" y="369.3" width="343" height="2.5" fill="#00f030" opacity=".9"/>
<path d="M284.00,288.8 L288.00,289.2 L292.00,289.8 L296.00,290.4 L300.00,291.1 L304.00,291.9 L308.00,292.8 L312.00,293.7 L316.00,294.6 L320.00,295.5 L324.00,296.4 L328.00,297.3 L332.00,298.1 L336.00,298.9 L340.00,299.7 L344.00,300.3 L348.00,300.9 L352.00,301.3 L356.00,300.9 L360.00,300.1 L364.00,299.2 L368.00,298.2 L372.00,297.0 L376.00,295.8 L380.00,294.6 L384.00,293.4 L388.00,292.2 L392.00,291.2 L396.00,290.2 L400.00,289.4 L404.00,288.8 L408.00,287.0 L412.00,284.7 L416.00,281.8 L420.00,278.6 L424.00,275.2 L428.00,271.5 L432.00,267.9 L436.00,264.3 L440.00,260.8 L444.00,257.6 L448.00,254.8 L452.00,252.5" fill="none" stroke="#60f800" stroke-width="5" stroke-linejoin="round"/>
<path d="M489.80,263.6 L493.80,264.5 L497.80,265.5 L501.80,266.8 L505.80,268.3 L509.80,269.9 L513.80,271.6 L517.80,273.3 L521.80,275.1 L525.80,277.0 L529.80,278.8 L533.80,280.6 L537.80,282.3 L541.80,283.9 L545.80,285.4 L549.80,286.7 L553.80,287.8 L557.80,288.7 L561.80,289.3 L565.80,290.1 L569.80,291.1 L573.80,292.1 L577.80,293.3 L581.80,294.6 L585.80,295.9 L589.80,297.3 L593.80,298.6 L597.80,300.0 L601.80,301.3 L605.80,302.6 L609.80,303.8 L613.80,305.0 L617.80,306.0 L621.80,306.8 L625.80,307.5" fill="none" stroke="#60f800" stroke-width="5" stroke-linejoin="round"/>
<path d="M482.8,377 L489.8,288.8 L496.8,377z" fill="#40f020" opacity=".55"/>
<rect x="485.8" y="345" width="9" height="32" fill="#b8ff00" opacity=".8"/>
<rect x="486.8" y="350" width="6" height="8" fill="#f0f000"/></g><use href="#paxes" stroke="#777" stroke-width="2" style="--tf:#555"/><path d="M283,557H627" stroke="#111" stroke-width="6"/><path d="" fill="none" stroke="#777" stroke-width="5"/><path d="M283.00,493.6 L284.00,503.5 L285.00,496.3 L286.00,501.2 L287.00,519.1 L288.00,496.8 L289.00,494.9 L290.00,507.2 L291.00,494.1 L292.00,502.6 L293.00,509.4 L294.00,495.5 L295.00,508.8 L296.00,490.1 L297.00,514.0 L298.00,507.2 L299.00,503.9 L300.00,511.9 L301.00,508.1 L302.00,495.6 L303.00,504.2 L304.00,501.2 L305.00,493.4 L306.00,490.3 L307.00,508.3 L308.00,503.5 L309.00,489.2 L310.00,504.8 L311.00,488.1 L312.00,504.6 L313.00,511.1 L314.00,487.7 L315.00,513.7 L316.00,486.5 L317.00,486.8 L318.00,486.5 L319.00,501.2 L320.00,494.5 L321.00,484.7 L322.00,490.0 L323.00,501.8 L324.00,497.0 L325.00,486.5 L326.00,490.5 L327.00,501.7 L328.00,490.9 L329.00,504.4 L330.00,494.4 L331.00,505.5 L332.00,493.2 L333.00,503.5 L334.00,483.5 L335.00,493.8 L336.00,484.7 L337.00,505.8 L338.00,490.0 L339.00,502.8 L340.00,482.9 L341.00,498.5 L342.00,496.2 L343.00,492.3 L344.00,490.3 L345.00,502.0 L346.00,502.2 L347.00,511.3 L348.00,501.7 L349.00,500.3 L350.00,512.0 L351.00,499.5 L352.00,487.3 L353.00,483.4 L354.00,490.2 L355.00,483.5 L356.00,501.6 L357.00,504.1 L358.00,489.1 L359.00,494.6 L360.00,504.4 L361.00,487.6 L362.00,482.9 L363.00,496.4 L364.00,507.1 L365.00,491.4 L366.00,487.3 L367.00,498.5 L368.00,494.8 L369.00,492.4 L370.00,496.3 L371.00,499.7 L372.00,479.2 L373.00,495.1 L374.00,509.5 L375.00,507.1 L376.00,501.4 L377.00,481.0 L378.00,505.5 L379.00,498.6 L380.00,510.2 L381.00,491.3 L382.00,506.7 L383.00,491.4 L384.00,491.4 L385.00,506.7 L386.00,502.4 L387.00,489.9 L388.00,511.3 L389.00,508.3 L390.00,510.2 L391.00,505.8 L392.00,504.0 L393.00,512.9 L394.00,501.1 L395.00,489.4 L396.00,492.1 L397.00,485.9 L398.00,507.1 L399.00,502.6 L400.00,489.4 L401.00,490.4 L402.00,491.0 L403.00,496.0 L404.00,505.8 L405.00,513.8 L406.00,508.3 L407.00,492.4 L408.00,497.4 L409.00,482.4 L410.00,490.5 L411.00,488.1 L412.00,494.8 L413.00,486.1 L414.00,480.6 L415.00,492.9 L416.00,484.2 L417.00,489.5 L418.00,485.7 L419.00,494.3 L420.00,479.2 L421.00,473.4 L422.00,489.1 L423.00,474.5 L424.00,472.5 L425.00,466.6 L426.00,474.7 L427.00,474.5 L428.00,490.2 L429.00,484.7 L430.00,479.3 L431.00,487.8 L432.00,464.3 L433.00,467.8 L434.00,472.5 L435.00,461.9 L436.00,464.6 L437.00,480.7 L438.00,458.9 L439.00,464.1 L440.00,461.0 L441.00,469.3 L442.00,462.1 L443.00,471.9 L444.00,461.2 L445.00,470.4 L446.00,462.4 L447.00,454.0 L448.00,465.5 L449.00,470.0 L450.00,449.7 L451.00,453.6 L452.00,465.9 L453.00,458.1 L454.00,451.1 L455.00,455.7 L456.00,450.8 L457.00,448.0 L458.00,444.3 L459.00,459.5 L460.00,469.6 L461.00,462.0 L462.00,451.9 L463.00,465.9 L464.00,470.0 L465.00,459.1 L466.00,458.4 L467.00,470.5 L468.00,463.6 L469.00,454.8 L470.00,469.2 L471.00,467.3 L472.00,480.4 L473.00,472.5 L474.00,466.8 L475.00,474.0 L476.00,472.1 L477.00,485.7 L478.00,494.0 L479.00,496.6 L480.00,496.5 L481.00,502.7 L482.00,519.3 M489.40,525.2 L490.40,529.2 L491.40,517.6 L492.40,515.2 L493.40,517.4 L494.40,509.0 L495.40,497.5 L496.40,509.7 L497.40,484.1 L498.40,505.5 L499.40,483.5 L500.40,498.2 L501.40,490.4 L502.40,483.3 L503.40,472.5 L504.40,471.5 L505.40,470.6 L506.40,484.7 L507.40,466.3 L508.40,473.9 L509.40,464.5 L510.40,479.6 L511.40,473.8 L512.40,458.6 L513.40,459.2 L514.40,458.0 L515.40,453.5 L516.40,459.1 L517.40,437.6 L518.40,437.6 L519.40,437.9 L520.40,445.1 L521.40,441.8 L522.40,437.0 L523.40,427.8" fill="none" stroke="#000" stroke-width="4" clip-path="url(#lineclip)"/></svg>
<div class="a" style="left:615px;top:92px;font-size:7.2px;color:#000;white-space:nowrap;line-height:1;letter-spacing:0px">2012-12-06 12:00 to 24:00</div>
<svg class="a" style="left:715px;top:2px" width="92" height="81" viewBox="202 200 531 463" preserveAspectRatio="none"><use href="#pbase" stroke="#666" stroke-width="2" style="--tf:#555"/><g clip-path="url(#specclip)"><rect x="284" y="255.8" width="343" height="1.8" fill="#9cff00"/>
<rect x="284" y="369.3" width="343" height="2.5" fill="#00f030" opacity=".9"/>
<path d="M284.00,307.7 L288.00,306.8 L292.00,305.6 L296.00,304.2 L300.00,302.6 L304.00,300.9 L308.00,299.0 L312.00,297.2 L316.00,295.4 L320.00,293.7 L324.00,292.1 L328.00,290.7 L332.00,289.6 L336.00,288.5 L340.00,285.4 L344.00,281.2 L348.00,276.1 L352.00,270.7 L356.00,265.3 L360.00,260.1 L364.00,255.6 L368.00,252.1" fill="none" stroke="#60f800" stroke-width="5" stroke-linejoin="round"/>
<path d="M421.20,263.6 L425.20,264.8 L429.20,266.4 L433.20,268.3 L437.20,270.4 L441.20,272.7 L445.20,275.1 L449.20,277.6 L453.20,280.0 L457.20,282.3 L461.20,284.4 L465.20,286.3 L469.20,287.8 L473.20,288.9 L477.20,289.5 L481.20,290.3 L485.20,291.3 L489.20,292.4 L493.20,293.5 L497.20,294.7 L501.20,296.0 L505.20,297.2 L509.20,298.3 L513.20,299.3 L517.20,300.2 L521.20,301.0 L525.20,301.3 L529.20,300.6 L533.20,299.8 L537.20,298.8 L541.20,297.7 L545.20,296.5 L549.20,295.3 L553.20,294.1 L557.20,292.9 L561.20,291.8 L565.20,290.7 L569.20,289.8 L573.20,289.1 L577.20,288.2 L581.20,286.5 L585.20,284.4 L589.20,281.9 L593.20,279.1 L597.20,276.2 L601.20,273.1 L605.20,270.1 L609.20,267.1 L613.20,264.3 L617.20,261.8 L621.20,259.6 L625.20,257.9" fill="none" stroke="#60f800" stroke-width="5" stroke-linejoin="round"/>
<path d="M397.1,377 L404.1,307.7 L411.1,377z" fill="#40f020" opacity=".55"/>
<rect x="400.1" y="345" width="9" height="32" fill="#b8ff00" opacity=".8"/>
<rect x="401.1" y="350" width="6" height="8" fill="#f0f000"/></g><use href="#paxes" stroke="#777" stroke-width="2" style="--tf:#555"/><path d="M283,557H627" stroke="#111" stroke-width="6"/><path d="" fill="none" stroke="#777" stroke-width="5"/><path d="M618.40,478.9 L619.40,465.8 L620.40,463.1 L621.40,477.5 L622.40,469.6 L623.40,467.4 L624.40,421.7 L625.40,438.6 L626.40,458.9 M382.8,550.4 V457.2 M413.7,501.1 h3" fill="none" stroke="#000" stroke-width="4" clip-path="url(#lineclip)"/></svg>
<div class="a" style="left:715px;top:92px;font-size:7.2px;color:#000;white-space:nowrap;line-height:1;letter-spacing:0px">2012-12-07 0:00 to 12:00</div>
<svg class="a" style="left:815px;top:2px" width="92" height="81" viewBox="202 200 531 463" preserveAspectRatio="none"><use href="#pbase" stroke="#666" stroke-width="2" style="--tf:#555"/><g clip-path="url(#specclip)"><rect x="284" y="255.8" width="343" height="1.8" fill="#9cff00"/>
<rect x="284" y="369.3" width="343" height="2.5" fill="#00f030" opacity=".9"/>
<path d="M301.15,257.3 L305.15,258.6 L309.15,260.2 L313.15,262.1 L317.15,264.3 L321.15,266.7 L325.15,269.2 L329.15,271.9 L333.15,274.6 L337.15,277.4 L341.15,280.1 L345.15,282.8 L349.15,285.3 L353.15,287.7 L357.15,289.9 L361.15,291.9 L365.15,293.6 L369.15,294.9 L373.15,295.5 L377.15,296.0 L381.15,296.6 L385.15,297.3 L389.15,298.1 L393.15,298.9 L397.15,299.8 L401.15,300.7 L405.15,301.7 L409.15,302.6 L413.15,303.5 L417.15,304.3 L421.15,305.1 L425.15,305.9 L429.15,306.5 L433.15,307.1 L437.15,307.6 L441.15,307.4 L445.15,306.9 L449.15,306.3 L453.15,305.6 L457.15,304.8 L461.15,304.0 L465.15,303.1 L469.15,302.2 L473.15,301.3 L477.15,300.4 L481.15,299.5 L485.15,298.6 L489.15,297.8 L493.15,297.0 L497.15,296.3 L501.15,295.8 L505.15,295.3 L509.15,294.3 L513.15,292.6 L517.15,290.5 L521.15,288.1 L525.15,285.4 L529.15,282.5 L533.15,279.5 L537.15,276.3 L541.15,273.1 L545.15,269.9 L549.15,266.8 L553.15,263.7 L557.15,260.8 L561.15,258.1 L565.15,255.7 L569.15,253.6 L573.15,251.9" fill="none" stroke="#60f800" stroke-width="5" stroke-linejoin="round"/>
<path d="M592.70,257.3 L596.70,258.8 L600.70,260.8 L604.70,263.3 L608.70,266.0 L612.70,268.7 L616.70,271.3 L620.70,273.6 L624.70,275.4" fill="none" stroke="#60f800" stroke-width="5" stroke-linejoin="round"/>
<path d="M304.4,377 L311.4,288.8 L318.4,377z" fill="#40f020" opacity=".55"/>
<rect x="307.4" y="345" width="9" height="32" fill="#b8ff00" opacity=".8"/>
<rect x="308.4" y="350" width="6" height="8" fill="#f0f000"/>
<path d="M568.5,377 L575.5,307.7 L582.5,377z" fill="#40f020" opacity=".55"/>
<rect x="571.5" y="345" width="9" height="32" fill="#b8ff00" opacity=".8"/>
<rect x="572.5" y="350" width="6" height="8" fill="#f0f000"/></g><use href="#paxes" stroke="#777" stroke-width="2" style="--tf:#555"/><path d="M283,557H627" stroke="#111" stroke-width="6"/><path d=" M296.8,425 V557" fill="none" stroke="#777" stroke-width="5"/><path d="M283.00,492.4 L284.00,482.3 L285.00,480.5 L286.00,492.1 L287.00,483.0 L288.00,488.0 L289.00,486.5 L290.00,494.6 L291.00,493.2 L292.00,493.6 L293.00,483.6 L294.00,499.7 L295.00,508.7 L296.00,493.3 M317.40,522.6 L318.40,523.6 L319.40,499.0 L320.40,501.9 L321.40,502.8 L322.40,500.7 L323.40,505.8 L324.40,495.2 L325.40,486.1 L326.40,482.5 L327.40,490.0 L328.40,487.8 L329.40,465.3 L330.40,461.5 L331.40,475.5 L332.40,471.9 L333.40,449.8 L334.40,449.4 L335.40,456.9 L336.40,458.4 L337.40,454.8 L338.40,455.5 L339.40,452.7 L340.40,445.0 L341.40,433.6 L342.40,445.4 L343.40,447.0 L344.40,445.4 L345.40,437.1 L346.40,433.2 L347.40,456.4 L348.40,428.7 L349.40,436.8 L350.40,432.4 L351.40,438.2 L352.40,438.9 L353.40,436.4 L354.40,446.5 L355.40,435.8 L356.40,451.9 L357.40,464.4 L358.40,445.9 L359.40,450.7 L360.40,441.5 L361.40,462.5 L362.40,454.8 L363.40,456.4 L364.40,466.3 L365.40,451.4 L366.40,446.9 L367.40,470.0 L368.40,457.5 L369.40,455.6 L370.40,469.2 L371.40,481.3 L372.40,470.1 L373.40,451.8 L374.40,479.6 L375.40,467.6 L376.40,481.1 L377.40,471.4 L378.40,472.0 L379.40,478.2 L380.40,481.9 L381.40,475.6 L382.40,467.3 L383.40,463.6 L384.40,479.4 L385.40,487.5 L386.40,469.2 L387.40,480.0 L388.40,456.4 L389.40,488.0 L390.40,472.9 L391.40,489.2 L392.40,466.0 L393.40,487.7 L394.40,475.7 L395.40,480.6 L396.40,485.5 L397.40,470.9 L398.40,493.5 L399.40,478.2 L400.40,499.4 L401.40,482.3 L402.40,479.1 L403.40,494.4 L404.40,503.6 L405.40,480.0 L406.40,490.5 L407.40,482.0 L408.40,498.3 L409.40,484.4 L410.40,502.7 L411.40,495.8 L412.40,500.6 L413.40,489.8 L414.40,500.9 L415.40,514.3 L416.40,496.6 L417.40,506.0 L418.40,496.1 L419.40,518.3 L420.40,517.5 L421.40,510.3 L422.40,498.4 L423.40,531.3 L424.40,503.0 L425.40,516.4 L426.40,522.6 L427.40,486.5 L428.40,498.3 L429.40,498.7 L430.40,517.0 L431.40,524.2 L432.40,527.9 L433.40,518.5 L434.40,508.5 L435.40,501.4 L436.40,511.2 L437.40,517.0 L438.40,511.1 L439.40,532.5 L440.40,525.0 L441.40,517.4 L442.40,514.7 L443.40,528.5 L444.40,523.0 L445.40,498.4 L446.40,525.3 L447.40,519.3 L448.40,508.7 L449.40,516.6 L450.40,510.4 L451.40,502.5 L452.40,525.7 L453.40,500.3 L454.40,503.1 L455.40,522.2 L456.40,527.1 L457.40,490.6 L458.40,522.3 L459.40,513.2 L460.40,528.9 L461.40,504.3 L462.40,525.0 L463.40,519.1 L464.40,513.8 L465.40,518.7 L466.40,531.9 L467.40,517.6 L468.40,506.4 L469.40,532.3 L470.40,507.8 L471.40,523.3 L472.40,515.5 L473.40,516.8 L474.40,507.5 L475.40,514.4 L476.40,504.1 L477.40,514.2 L478.40,505.5 L479.40,489.5 L480.40,498.8 L481.40,495.0 L482.40,511.0 L483.40,497.6 L484.40,511.9 L485.40,496.8 L486.40,500.1 L487.40,493.6 L488.40,504.3 L489.40,492.8 L490.40,500.1 L491.40,494.4 L492.40,497.9 L493.40,499.4 L494.40,498.9 L495.40,491.1 L496.40,506.4 L497.40,480.7 L498.40,488.1 L499.40,479.8 L500.40,492.9 L501.40,487.3 L502.40,481.2 L503.40,486.5 L504.40,487.5 L505.40,487.9 L506.40,480.3 L507.40,494.8 L508.40,478.1 L509.40,496.0 L510.40,479.7 L511.40,498.6 L512.40,482.8 L513.40,472.8 L514.40,481.6 L515.40,479.9 L516.40,470.7 L517.40,462.8 L518.40,478.8 L519.40,460.0 L520.40,459.9 L521.40,458.5 L522.40,469.7 L523.40,458.5 L524.40,454.1 L525.40,461.1 L526.40,451.5 L527.40,465.1 L528.40,445.2 L529.40,454.8 L530.40,451.4 L531.40,456.1 L532.40,452.2 L533.40,441.9 L534.40,442.5 L535.40,460.0 L536.40,443.4 L537.40,454.5 L538.40,435.8 L539.40,454.7 L540.40,444.8 L541.40,448.6 L542.40,455.1 L543.40,464.4 L544.40,453.6 L545.40,462.9 L546.40,461.7 L547.40,460.9 L548.40,466.4 L549.40,462.4 L550.40,458.5 L551.40,451.7 L552.40,454.3 L553.40,464.0 L554.40,473.2 L555.40,484.0 L556.40,484.5 L557.40,485.4 L558.40,493.6 L559.40,481.2 L560.40,488.7 L561.40,485.9 L562.40,496.1 L563.40,493.6 L564.40,501.4 L565.40,509.1 L566.40,498.6 L567.40,516.0 L568.40,512.2 M575.40,486.7 L576.40,489.5 L577.40,470.6 L578.40,480.9 L579.40,483.4 L580.40,493.8 L581.40,483.7 L582.40,483.3 L583.40,485.3 L584.40,466.6 L585.40,475.2 L586.40,463.4 L587.40,468.1 L588.40,464.5 L589.40,464.8 L590.40,474.6 L591.40,460.1 L592.40,481.5 L593.40,456.2 L594.40,450.6 L595.40,462.4 L596.40,463.3 L597.40,457.0 L598.40,451.4 L599.40,449.1 L600.40,428.4 L601.40,433.9 L602.40,424.5 L603.40,432.5 L604.40,424.2 L605.40,431.3 L606.40,428.3 L607.40,439.1 L608.40,437.8 L609.40,446.3 L610.40,428.3 L611.40,432.0 L612.40,432.7 L613.40,443.6 L614.40,442.1 L615.40,449.2 L616.40,441.9 L617.40,456.6 L618.40,466.2 L619.40,447.5 L620.40,446.0 L621.40,467.0 L622.40,453.6 L623.40,462.7 L624.40,447.0 L625.40,456.6 L626.40,450.2" fill="none" stroke="#000" stroke-width="4" clip-path="url(#lineclip)"/></svg>
<div class="a" style="left:815px;top:92px;font-size:7.2px;color:#000;white-space:nowrap;line-height:1;letter-spacing:0px">2012-12-07 12:00 to 24:00</div>
<svg class="a" style="left:915px;top:2px" width="92" height="81" viewBox="202 200 531 463" preserveAspectRatio="none"><use href="#pbase" stroke="#666" stroke-width="2" style="--tf:#555"/><g clip-path="url(#specclip)"><rect x="284" y="255.8" width="343" height="1.8" fill="#9cff00"/>
<rect x="284" y="369.3" width="343" height="2.5" fill="#00f030" opacity=".9"/>
<path d="M284.00,288.8 L288.00,288.5 L292.00,288.1 L296.00,287.7 L300.00,287.3 L304.00,286.9 L308.00,286.4 L312.00,285.8 L316.00,285.3 L320.00,284.7 L324.00,284.1 L328.00,283.5 L332.00,282.9 L336.00,282.2 L340.00,281.5 L344.00,280.8 L348.00,280.1 L352.00,279.4 L356.00,278.7 L360.00,278.0 L364.00,277.3 L368.00,276.5 L372.00,275.8 L376.00,275.1 L380.00,274.3 L384.00,273.6 L388.00,272.9 L392.00,272.2 L396.00,271.5 L400.00,270.8 L404.00,270.1 L408.00,269.5 L412.00,268.8 L416.00,268.2 L420.00,267.6 L424.00,267.0 L428.00,266.5 L432.00,266.0 L436.00,265.5 L440.00,265.0 L444.00,264.6 L448.00,264.2 L452.00,263.9 L456.00,263.6 L460.00,264.0 L464.00,264.3 L468.00,264.7 L472.00,265.1 L476.00,265.6 L480.00,266.1 L484.00,266.6 L488.00,267.2 L492.00,267.8 L496.00,268.4 L500.00,269.0 L504.00,269.6 L508.00,270.3 L512.00,271.0 L516.00,271.6 L520.00,272.3 L524.00,273.1 L528.00,273.8 L532.00,274.5 L536.00,275.2 L540.00,276.0 L544.00,276.7 L548.00,277.4 L552.00,278.2 L556.00,278.9 L560.00,279.6 L564.00,280.3 L568.00,281.0 L572.00,281.7 L576.00,282.4 L580.00,283.0 L584.00,283.7 L588.00,284.3 L592.00,284.9 L596.00,285.4 L600.00,286.0 L604.00,286.5 L608.00,287.0 L612.00,287.4 L616.00,287.8 L620.00,288.2 L624.00,288.6" fill="none" stroke="#60f800" stroke-width="5" stroke-linejoin="round"/></g><use href="#paxes" stroke="#777" stroke-width="2" style="--tf:#555"/><path d="M283,557H627" stroke="#111" stroke-width="6"/><path d="" fill="none" stroke="#777" stroke-width="5"/><path d="" fill="none" stroke="#000" stroke-width="4" clip-path="url(#lineclip)"/></svg>
<div class="a" style="left:915px;top:92px;font-size:7.2px;color:#000;white-space:nowrap;line-height:1;letter-spacing:0px">2012-12-08 0:00 to 12:00</div>
</div>
<div class="a" style="left:929px;top:73px;width:2px;height:118px;background:#fff"></div>
<div class="a" style="left:8px;top:173px;width:920px;height:16px;border-top:1px solid #7a8a99;border-bottom:1px solid #7a8a99;background:#eee"></div>
<div class="a" style="left:8px;top:174px;width:16px;height:14px;background:#eee;border-left:1px solid #fff;border-top:1px solid #fff;border-right:1px solid #7a8a99"></div>
<svg class="a" style="left:8px;top:174px" width="16" height="14"><path d="M5,7 L9.5,2.5 V11.5z" fill="#333"/></svg>
<div class="a" style="left:912px;top:174px;width:16px;height:14px;background:#eee;border-left:1px solid #7a8a99;border-top:1px solid #fff"></div>
<svg class="a" style="left:912px;top:174px" width="16" height="14"><path d="M10.5,7 L6,2.5 V11.5z" fill="#333"/></svg>
<div class="a" style="left:93px;top:173px;width:133px;height:15px;border:1px solid #6382bf;border-bottom:none;background:linear-gradient(#fff 0%,#eef4fa 35%,#bdd2e6 100%)"></div>
<svg class="a" style="left:150px;top:176px" width="20" height="11"><path d="M7.5,1V10M9.5,1V10M11.5,1V10" stroke="#6382bf" stroke-width="1"/></svg>
<div class="a" style="left:6px;top:189px;width:925px;height:2px;background:#fafafa"></div>
<svg class="a" style="left:6px;top:191px" width="925" height="8"><defs><pattern id="dots" width="4" height="4" patternUnits="userSpaceOnUse" x="1.5" y="1"><rect x="1.5" y="1.5" width="1.2" height="1.2" fill="#6a7f99"/><rect x="3.5" y="3.5" width="1.2" height="1.2" fill="#6a7f99" opacity=".0"/></pattern><pattern id="dots2" width="4" height="4" patternUnits="userSpaceOnUse" x="3.5" y="1"><rect x="1.5" y="4" width="1.2" height="1.2" fill="#6a7f99"/></pattern></defs><rect x="0" y="0" width="923" height="8" fill="#f2f2f2"/><g fill="#6a7f99"><rect x="4" y="3" width="1" height="1"/><rect x="6" y="5" width="1" height="1"/><rect x="8" y="3" width="1" height="1"/><rect x="10" y="5" width="1" height="1"/><rect x="12" y="3" width="1" height="1"/><rect x="14" y="5" width="1" height="1"/><rect x="16" y="3" width="1" height="1"/><rect x="18" y="5" width="1" height="1"/><rect x="20" y="3" width="1" height="1"/><rect x="22" y="5" width="1" height="1"/><rect x="24" y="3" width="1" height="1"/><rect x="26" y="5" width="1" height="1"/><rect x="28" y="3" width="1" height="1"/><rect x="30" y="5" width="1" height="1"/><rect x="32" y="3" width="1" height="1"/><rect x="34" y="5" width="1" height="1"/><rect x="36" y="3" width="1" height="1"/><rect x="38" y="5" width="1" height="1"/><rect x="40" y="3" width="1" height="1"/><rect x="42" y="5" width="1" height="1"/><rect x="44" y="3" width="1" height="1"/><rect x="46" y="5" width="1" height="1"/><rect x="48" y="3" width="1" height="1"/><rect x="50" y="5" width="1" height="1"/><rect x="52" y="3" width="1" height="1"/><rect x="54" y="5" width="1" height="1"/><rect x="56" y="3" width="1" height="1"/><rect x="58" y="5" width="1" height="1"/><rect x="60" y="3" width="1" height="1"/><rect x="62" y="5" width="1" height="1"/><rect x="64" y="3" width="1" height="1"/><rect x="66" y="5" width="1" height="1"/><rect x="68" y="3" width="1" height="1"/><rect x="70" y="5" width="1" height="1"/><rect x="72" y="3" width="1" height="1"/><rect x="74" y="5" width="1" height="1"/><rect x="76" y="3" width="1" height="1"/><rect x="78" y="5" width="1" height="1"/><rect x="80" y="3" width="1" height="1"/><rect x="82" y="5" width="1" height="1"/><rect x="84" y="3" width="1" height="1"/><rect x="86" y="5" width="1" height="1"/><rect x="88" y="3" width="1" height="1"/><rect x="90" y="5" width="1" height="1"/><rect x="92" y="3" width="1" height="1"/><rect x="94" y="5" width="1" height="1"/><rect x="96" y="3" width="1" height="1"/><rect x="98" y="5" width="1" height="1"/><rect x="100" y="3" width="1" height="1"/><rect x="102" y="5" width="1" height="1"/><rect x="104" y="3" width="1" height="1"/><rect x="106" y="5" width="1" height="1"/><rect x="108" y="3" width="1" height="1"/><rect x="110" y="5" width="1" height="1"/><rect x="112" y="3" width="1" height="1"/><rect x="114" y="5" width="1" height="1"/><rect x="116" y="3" width="1" height="1"/><rect x="118" y="5" width="1" height="1"/><rect x="120" y="3" width="1" height="1"/><rect x="122" y="5" width="1" height="1"/><rect x="124" y="3" width="1" height="1"/><rect x="126" y="5" width="1" height="1"/><rect x="128" y="3" width="1" height="1"/><rect x="130" y="5" width="1" height="1"/><rect x="132" y="3" width="1" height="1"/><rect x="134" y="5" width="1" height="1"/><rect x="136" y="3" width="1" height="1"/><rect x="138" y="5" width="1" height="1"/><rect x="140" y="3" width="1" height="1"/><rect x="142" y="5" width="1" height="1"/><rect x="144" y="3" width="1" height="1"/><rect x="146" y="5" width="1" height="1"/><rect x="148" y="3" width="1" height="1"/><rect x="150" y="5" width="1" height="1"/><rect x="152" y="3" width="1" height="1"/><rect x="154" y="5" width="1" height="1"/><rect x="156" y="3" width="1" height="1"/><rect x="158" y="5" width="1" height="1"/><rect x="160" y="3" width="1" height="1"/><rect x="162" y="5" width="1" height="1"/><rect x="164" y="3" width="1" height="1"/><rect x="166" y="5" width="1" height="1"/><rect x="168" y="3" width="1" height="1"/><rect x="170" y="5" width="1" height="1"/><rect x="172" y="3" width="1" height="1"/><rect x="174" y="5" width="1" height="1"/><rect x="176" y="3" width="1" height="1"/><rect x="178" y="5" width="1" height="1"/><rect x="180" y="3" width="1" height="1"/><rect x="182" y="5" width="1" height="1"/><rect x="184" y="3" width="1" height="1"/><rect x="186" y="5" width="1" height="1"/><rect x="188" y="3" width="1" height="1"/><rect x="190" y="5" width="1" height="1"/><rect x="192" y="3" width="1" height="1"/><rect x="194" y="5" width="1" height="1"/><rect x="196" y="3" width="1" height="1"/><rect x="198" y="5" width="1" height="1"/><rect x="200" y="3" width="1" height="1"/><rect x="202" y="5" width="1" height="1"/><rect x="204" y="3" width="1" height="1"/><rect x="206" y="5" width="1" height="1"/><rect x="208" y="3" width="1" height="1"/><rect x="210" y="5" width="1" height="1"/><rect x="212" y="3" width="1" height="1"/><rect x="214" y="5" width="1" height="1"/><rect x="216" y="3" width="1" height="1"/><rect x="218" y="5" width="1" height="1"/><rect x="220" y="3" width="1" height="1"/><rect x="222" y="5" width="1" height="1"/><rect x="224" y="3" width="1" height="1"/><rect x="226" y="5" width="1" height="1"/><rect x="228" y="3" width="1" height="1"/><rect x="230" y="5" width="1" height="1"/><rect x="232" y="3" width="1" height="1"/><rect x="234" y="5" width="1" height="1"/><rect x="236" y="3" width="1" height="1"/><rect x="238" y="5" width="1" height="1"/><rect x="240" y="3" width="1" height="1"/><rect x="242" y="5" width="1" height="1"/><rect x="244" y="3" width="1" height="1"/><rect x="246" y="5" width="1" height="1"/><rect x="248" y="3" width="1" height="1"/><rect x="250" y="5" width="1" height="1"/><rect x="252" y="3" width="1" height="1"/><rect x="254" y="5" width="1" height="1"/><rect x="256" y="3" width="1" height="1"/><rect x="258" y="5" width="1" height="1"/><rect x="260" y="3" width="1" height="1"/><rect x="262" y="5" width="1" height="1"/><rect x="264" y="3" width="1" height="1"/><rect x="266" y="5" width="1" height="1"/><rect x="268" y="3" width="1" height="1"/><rect x="270" y="5" width="1" height="1"/><rect x="272" y="3" width="1" height="1"/><rect x="274" y="5" width="1" height="1"/><rect x="276" y="3" width="1" height="1"/><rect x="278" y="5" width="1" height="1"/><rect x="280" y="3" width="1" height="1"/><rect x="282" y="5" width="1" height="1"/><rect x="284" y="3" width="1" height="1"/><rect x="286" y="5" width="1" height="1"/><rect x="288" y="3" width="1" height="1"/><rect x="290" y="5" width="1" height="1"/><rect x="292" y="3" width="1" height="1"/><rect x="294" y="5" width="1" height="1"/><rect x="296" y="3" width="1" height="1"/><rect x="298" y="5" width="1" height="1"/><rect x="300" y="3" width="1" height="1"/><rect x="302" y="5" width="1" height="1"/><rect x="304" y="3" width="1" height="1"/><rect x="306" y="5" width="1" height="1"/><rect x="308" y="3" width="1" height="1"/><rect x="310" y="5" width="1" height="1"/><rect x="312" y="3" width="1" height="1"/><rect x="314" y="5" width="1" height="1"/><rect x="316" y="3" width="1" height="1"/><rect x="318" y="5" width="1" height="1"/><rect x="320" y="3" width="1" height="1"/><rect x="322" y="5" width="1" height="1"/><rect x="324" y="3" width="1" height="1"/><rect x="326" y="5" width="1" height="1"/><rect x="328" y="3" width="1" height="1"/><rect x="330" y="5" width="1" height="1"/><rect x="332" y="3" width="1" height="1"/><rect x="334" y="5" width="1" height="1"/><rect x="336" y="3" width="1" height="1"/><rect x="338" y="5" width="1" height="1"/><rect x="340" y="3" width="1" height="1"/><rect x="342" y="5" width="1" height="1"/><rect x="344" y="3" width="1" height="1"/><rect x="346" y="5" width="1" height="1"/><rect x="348" y="3" width="1" height="1"/><rect x="350" y="5" width="1" height="1"/><rect x="352" y="3" width="1" height="1"/><rect x="354" y="5" width="1" height="1"/><rect x="356" y="3" width="1" height="1"/><rect x="358" y="5" width="1" height="1"/><rect x="360" y="3" width="1" height="1"/><rect x="362" y="5" width="1" height="1"/><rect x="364" y="3" width="1" height="1"/><rect x="366" y="5" width="1" height="1"/><rect x="368" y="3" width="1" height="1"/><rect x="370" y="5" width="1" height="1"/><rect x="372" y="3" width="1" height="1"/><rect x="374" y="5" width="1" height="1"/><rect x="376" y="3" width="1" height="1"/><rect x="378" y="5" width="1" height="1"/><rect x="380" y="3" width="1" height="1"/><rect x="382" y="5" width="1" height="1"/><rect x="384" y="3" width="1" height="1"/><rect x="386" y="5" width="1" height="1"/><rect x="388" y="3" width="1" height="1"/><rect x="390" y="5" width="1" height="1"/><rect x="392" y="3" width="1" height="1"/><rect x="394" y="5" width="1" height="1"/><rect x="396" y="3" width="1" height="1"/><rect x="398" y="5" width="1" height="1"/><rect x="400" y="3" width="1" height="1"/><rect x="402" y="5" width="1" height="1"/><rect x="404" y="3" width="1" height="1"/><rect x="406" y="5" width="1" height="1"/><rect x="408" y="3" width="1" height="1"/><rect x="410" y="5" width="1" height="1"/><rect x="412" y="3" width="1" height="1"/><rect x="414" y="5" width="1" height="1"/><rect x="416" y="3" width="1" height="1"/><rect x="418" y="5" width="1" height="1"/><rect x="420" y="3" width="1" height="1"/><rect x="422" y="5" width="1" height="1"/><rect x="424" y="3" width="1" height="1"/><rect x="426" y="5" width="1" height="1"/><rect x="428" y="3" width="1" height="1"/><rect x="430" y="5" width="1" height="1"/><rect x="432" y="3" width="1" height="1"/><rect x="434" y="5" width="1" height="1"/><rect x="436" y="3" width="1" height="1"/><rect x="438" y="5" width="1" height="1"/><rect x="440" y="3" width="1" height="1"/><rect x="442" y="5" width="1" height="1"/><rect x="444" y="3" width="1" height="1"/><rect x="446" y="5" width="1" height="1"/><rect x="448" y="3" width="1" height="1"/><rect x="450" y="5" width="1" height="1"/><rect x="452" y="3" width="1" height="1"/><rect x="454" y="5" width="1" height="1"/><rect x="456" y="3" width="1" height="1"/><rect x="458" y="5" width="1" height="1"/><rect x="460" y="3" width="1" height="1"/><rect x="462" y="5" width="1" height="1"/><rect x="464" y="3" width="1" height="1"/><rect x="466" y="5" width="1" height="1"/><rect x="468" y="3" width="1" height="1"/><rect x="470" y="5" width="1" height="1"/><rect x="472" y="3" width="1" height="1"/><rect x="474" y="5" width="1" height="1"/><rect x="476" y="3" width="1" height="1"/><rect x="478" y="5" width="1" height="1"/><rect x="480" y="3" width="1" height="1"/><rect x="482" y="5" width="1" height="1"/><rect x="484" y="3" width="1" height="1"/><rect x="486" y="5" width="1" height="1"/><rect x="488" y="3" width="1" height="1"/><rect x="490" y="5" width="1" height="1"/><rect x="492" y="3" width="1" height="1"/><rect x="494" y="5" width="1" height="1"/><rect x="496" y="3" width="1" height="1"/><rect x="498" y="5" width="1" height="1"/><rect x="500" y="3" width="1" height="1"/><rect x="502" y="5" width="1" height="1"/><rect x="504" y="3" width="1" height="1"/><rect x="506" y="5" width="1" height="1"/><rect x="508" y="3" width="1" height="1"/><rect x="510" y="5" width="1" height="1"/><rect x="512" y="3" width="1" height="1"/><rect x="514" y="5" width="1" height="1"/><rect x="516" y="3" width="1" height="1"/><rect x="518" y="5" width="1" height="1"/><rect x="520" y="3" width="1" height="1"/><rect x="522" y="5" width="1" height="1"/><rect x="524" y="3" width="1" height="1"/><rect x="526" y="5" width="1" height="1"/><rect x="528" y="3" width="1" height="1"/><rect x="530" y="5" width="1" height="1"/><rect x="532" y="3" width="1" height="1"/><rect x="534" y="5" width="1" height="1"/><rect x="536" y="3" width="1" height="1"/><rect x="538" y="5" width="1" height="1"/><rect x="540" y="3" width="1" height="1"/><rect x="542" y="5" width="1" height="1"/><rect x="544" y="3" width="1" height="1"/><rect x="546" y="5" width="1" height="1"/><rect x="548" y="3" width="1" height="1"/><rect x="550" y="5" width="1" height="1"/><rect x="552" y="3" width="1" height="1"/><rect x="554" y="5" width="1" height="1"/><rect x="556" y="3" width="1" height="1"/><rect x="558" y="5" width="1" height="1"/><rect x="560" y="3" width="1" height="1"/><rect x="562" y="5" width="1" height="1"/><rect x="564" y="3" width="1" height="1"/><rect x="566" y="5" width="1" height="1"/><rect x="568" y="3" width="1" height="1"/><rect x="570" y="5" width="1" height="1"/><rect x="572" y="3" width="1" height="1"/><rect x="574" y="5" width="1" height="1"/><rect x="576" y="3" width="1" height="1"/><rect x="578" y="5" width="1" height="1"/><rect x="580" y="3" width="1" height="1"/><rect x="582" y="5" width="1" height="1"/><rect x="584" y="3" width="1" height="1"/><rect x="586" y="5" width="1" height="1"/><rect x="588" y="3" width="1" height="1"/><rect x="590" y="5" width="1" height="1"/><rect x="592" y="3" width="1" height="1"/><rect x="594" y="5" width="1" height="1"/><rect x="596" y="3" width="1" height="1"/><rect x="598" y="5" width="1" height="1"/><rect x="600" y="3" width="1" height="1"/><rect x="602" y="5" width="1" height="1"/><rect x="604" y="3" width="1" height="1"/><rect x="606" y="5" width="1" height="1"/><rect x="608" y="3" width="1" height="1"/><rect x="610" y="5" width="1" height="1"/><rect x="612" y="3" width="1" height="1"/><rect x="614" y="5" width="1" height="1"/><rect x="616" y="3" width="1" height="1"/><rect x="618" y="5" width="1" height="1"/><rect x="620" y="3" width="1" height="1"/><rect x="622" y="5" width="1" height="1"/><rect x="624" y="3" width="1" height="1"/><rect x="626" y="5" width="1" height="1"/><rect x="628" y="3" width="1" height="1"/><rect x="630" y="5" width="1" height="1"/><rect x="632" y="3" width="1" height="1"/><rect x="634" y="5" width="1" height="1"/><rect x="636" y="3" width="1" height="1"/><rect x="638" y="5" width="1" height="1"/><rect x="640" y="3" width="1" height="1"/><rect x="642" y="5" width="1" height="1"/><rect x="644" y="3" width="1" height="1"/><rect x="646" y="5" width="1" height="1"/><rect x="648" y="3" width="1" height="1"/><rect x="650" y="5" width="1" height="1"/><rect x="652" y="3" width="1" height="1"/><rect x="654" y="5" width="1" height="1"/><rect x="656" y="3" width="1" height="1"/><rect x="658" y="5" width="1" height="1"/><rect x="660" y="3" width="1" height="1"/><rect x="662" y="5" width="1" height="1"/><rect x="664" y="3" width="1" height="1"/><rect x="666" y="5" width="1" height="1"/><rect x="668" y="3" width="1" height="1"/><rect x="670" y="5" width="1" height="1"/><rect x="672" y="3" width="1" height="1"/><rect x="674" y="5" width="1" height="1"/><rect x="676" y="3" width="1" height="1"/><rect x="678" y="5" width="1" height="1"/><rect x="680" y="3" width="1" height="1"/><rect x="682" y="5" width="1" height="1"/><rect x="684" y="3" width="1" height="1"/><rect x="686" y="5" width="1" height="1"/><rect x="688" y="3" width="1" height="1"/><rect x="690" y="5" width="1" height="1"/><rect x="692" y="3" width="1" height="1"/><rect x="694" y="5" width="1" height="1"/><rect x="696" y="3" width="1" height="1"/><rect x="698" y="5" width="1" height="1"/><rect x="700" y="3" width="1" height="1"/><rect x="702" y="5" width="1" height="1"/><rect x="704" y="3" width="1" height="1"/><rect x="706" y="5" width="1" height="1"/><rect x="708" y="3" width="1" height="1"/><rect x="710" y="5" width="1" height="1"/><rect x="712" y="3" width="1" height="1"/><rect x="714" y="5" width="1" height="1"/><rect x="716" y="3" width="1" height="1"/><rect x="718" y="5" width="1" height="1"/><rect x="720" y="3" width="1" height="1"/><rect x="722" y="5" width="1" height="1"/><rect x="724" y="3" width="1" height="1"/><rect x="726" y="5" width="1" height="1"/><rect x="728" y="3" width="1" height="1"/><rect x="730" y="5" width="1" height="1"/><rect x="732" y="3" width="1" height="1"/><rect x="734" y="5" width="1" height="1"/><rect x="736" y="3" width="1" height="1"/><rect x="738" y="5" width="1" height="1"/><rect x="740" y="3" width="1" height="1"/><rect x="742" y="5" width="1" height="1"/><rect x="744" y="3" width="1" height="1"/><rect x="746" y="5" width="1" height="1"/><rect x="748" y="3" width="1" height="1"/><rect x="750" y="5" width="1" height="1"/><rect x="752" y="3" width="1" height="1"/><rect x="754" y="5" width="1" height="1"/><rect x="756" y="3" width="1" height="1"/><rect x="758" y="5" width="1" height="1"/><rect x="760" y="3" width="1" height="1"/><rect x="762" y="5" width="1" height="1"/><rect x="764" y="3" width="1" height="1"/><rect x="766" y="5" width="1" height="1"/><rect x="768" y="3" width="1" height="1"/><rect x="770" y="5" width="1" height="1"/><rect x="772" y="3" width="1" height="1"/><rect x="774" y="5" width="1" height="1"/><rect x="776" y="3" width="1" height="1"/><rect x="778" y="5" width="1" height="1"/><rect x="780" y="3" width="1" height="1"/><rect x="782" y="5" width="1" height="1"/><rect x="784" y="3" width="1" height="1"/><rect x="786" y="5" width="1" height="1"/><rect x="788" y="3" width="1" height="1"/><rect x="790" y="5" width="1" height="1"/><rect x="792" y="3" width="1" height="1"/><rect x="794" y="5" width="1" height="1"/><rect x="796" y="3" width="1" height="1"/><rect x="798" y="5" width="1" height="1"/><rect x="800" y="3" width="1" height="1"/><rect x="802" y="5" width="1" height="1"/><rect x="804" y="3" width="1" height="1"/><rect x="806" y="5" width="1" height="1"/><rect x="808" y="3" width="1" height="1"/><rect x="810" y="5" width="1" height="1"/><rect x="812" y="3" width="1" height="1"/><rect x="814" y="5" width="1" height="1"/><rect x="816" y="3" width="1" height="1"/><rect x="818" y="5" width="1" height="1"/><rect x="820" y="3" width="1" height="1"/><rect x="822" y="5" width="1" height="1"/><rect x="824" y="3" width="1" height="1"/><rect x="826" y="5" width="1" height="1"/><rect x="828" y="3" width="1" height="1"/><rect x="830" y="5" width="1" height="1"/><rect x="832" y="3" width="1" height="1"/><rect x="834" y="5" width="1" height="1"/><rect x="836" y="3" width="1" height="1"/><rect x="838" y="5" width="1" height="1"/><rect x="840" y="3" width="1" height="1"/><rect x="842" y="5" width="1" height="1"/><rect x="844" y="3" width="1" height="1"/><rect x="846" y="5" width="1" height="1"/><rect x="848" y="3" width="1" height="1"/><rect x="850" y="5" width="1" height="1"/><rect x="852" y="3" width="1" height="1"/><rect x="854" y="5" width="1" height="1"/><rect x="856" y="3" width="1" height="1"/><rect x="858" y="5" width="1" height="1"/><rect x="860" y="3" width="1" height="1"/><rect x="862" y="5" width="1" height="1"/><rect x="864" y="3" width="1" height="1"/><rect x="866" y="5" width="1" height="1"/><rect x="868" y="3" width="1" height="1"/><rect x="870" y="5" width="1" height="1"/><rect x="872" y="3" width="1" height="1"/><rect x="874" y="5" width="1" height="1"/><rect x="876" y="3" width="1" height="1"/><rect x="878" y="5" width="1" height="1"/><rect x="880" y="3" width="1" height="1"/><rect x="882" y="5" width="1" height="1"/><rect x="884" y="3" width="1" height="1"/><rect x="886" y="5" width="1" height="1"/><rect x="888" y="3" width="1" height="1"/><rect x="890" y="5" width="1" height="1"/><rect x="892" y="3" width="1" height="1"/><rect x="894" y="5" width="1" height="1"/><rect x="896" y="3" width="1" height="1"/><rect x="898" y="5" width="1" height="1"/><rect x="900" y="3" width="1" height="1"/><rect x="902" y="5" width="1" height="1"/><rect x="904" y="3" width="1" height="1"/><rect x="906" y="5" width="1" height="1"/><rect x="908" y="3" width="1" height="1"/><rect x="910" y="5" width="1" height="1"/><rect x="912" y="3" width="1" height="1"/><rect x="914" y="5" width="1" height="1"/><rect x="916" y="3" width="1" height="1"/><rect x="918" y="5" width="1" height="1"/></g></svg>
<div class="a" style="left:6px;top:199px;width:926px;height:483px;border-top:1px solid #7a8a99;border-left:1px solid #7a8a99;background:#eee"></div>
<svg class="a" style="left:202px;top:200px" width="531" height="463" viewBox="202 200 531 463"><defs>
<linearGradient id="specgrad" x1="0" y1="0" x2="0" y2="1">
<stop offset="0" stop-color="#00ff80"/><stop offset="0.15" stop-color="#00ff8c"/><stop offset="0.47" stop-color="#00ffaa"/><stop offset="0.71" stop-color="#00ffbe"/><stop offset="1" stop-color="#00ffbc"/></linearGradient>
<linearGradient id="cbgrad" x1="0" y1="1" x2="0" y2="0">
<stop offset="0" stop-color="#000080"/><stop offset="0.12" stop-color="#0000ff"/><stop offset="0.25" stop-color="#00ffff"/><stop offset="0.51" stop-color="#00ff00"/><stop offset="0.64" stop-color="#ffff00"/><stop offset="0.82" stop-color="#ff8000"/><stop offset="1" stop-color="#ff0000"/></linearGradient>
<filter id="blur1" x="-5%" y="-20%" width="110%" height="140%"><feGaussianBlur stdDeviation="1.2"/></filter><clipPath id="specclip"><rect x="284" y="247" width="343" height="130.5"/></clipPath>
<clipPath id="lineclip"><rect x="284" y="425" width="343" height="132"/></clipPath>
</defs><g id="pbase">
<rect x="202" y="200" width="531" height="463" fill="#fff" stroke="none"/>
<text x="456.0" y="238.3" class="pt" text-anchor="middle" textLength="202.1" lengthAdjust="spacingAndGlyphs" style="white-space:pre">RBSP-A/EMFISIS  HFR Spectra Data</text>
<rect x="284" y="251" width="343" height="126" fill="url(#specgrad)" stroke="none"/>
<rect x="639" y="247" width="12" height="131" fill="url(#cbgrad)" stroke="none"/>
</g><g clip-path="url(#specclip)"><rect x="284" y="255.8" width="343" height="1.8" fill="#9cff00"/>
<rect x="284" y="278.3" width="343" height="1.2" fill="#10f850" opacity=".6"/>
<rect x="284" y="287.3" width="343" height="1.2" fill="#10f850" opacity=".5"/>
<rect x="284" y="360.5" width="343" height="1.5" fill="#20f850" opacity=".7"/>
<rect x="284" y="364.8" width="343" height="1.5" fill="#20f850" opacity=".4"/>
<rect x="284" y="369.3" width="343" height="2.5" fill="#00f030" opacity=".9"/>
<path d="M284.00,300.5 L286.00,300.6 L288.00,300.3 L290.00,299.7 L292.00,298.0 L294.00,298.2 L296.00,299.5 L298.00,298.0 L300.00,298.4 L302.00,296.8 L304.00,296.9 L306.00,298.0 L308.00,296.9 L310.00,297.4 L312.00,296.0 L314.00,295.2 L316.00,294.6 L318.00,294.4 L320.00,294.9 L322.00,295.3 L324.00,293.8 L326.00,294.3 L328.00,291.7 L330.00,291.1 L332.00,290.7 L334.00,292.4 L336.00,290.2 L338.00,291.4 L340.00,291.8 L342.00,289.3 L344.00,289.1 L346.00,290.0 L348.00,286.6 L350.00,286.7 L352.00,285.0 L354.00,285.9 L356.00,284.8 L358.00,282.1 L360.00,282.4 L362.00,279.2 L364.00,280.0 L366.00,277.0 L368.00,273.8 L370.00,269.7 L372.00,266.8 L374.00,261.6" fill="none" stroke="#00f840" stroke-width="8" opacity=".75" filter="url(#blur1)"/>
<path d="M284.00,295.5 L285.00,296.4 L286.00,295.2 L287.00,296.5 L288.00,294.8 L289.00,296.0 L290.00,294.5 L291.00,294.3 L292.00,295.0 L293.00,295.0 L294.00,294.2 L295.00,294.6 L296.00,293.4 L297.00,293.1 L298.00,293.6 L299.00,294.6 L300.00,293.8 L301.00,293.4 L302.00,293.0 L303.00,294.0 L304.00,292.5 L305.00,294.0 L306.00,293.5 L307.00,292.5 L308.00,292.0 L309.00,292.5 L310.00,291.4 L311.00,292.0 L312.00,291.0 L313.00,289.9 L314.00,289.7 L315.00,290.0 L316.00,289.4 L317.00,291.1 L318.00,289.6 L319.00,289.5 L320.00,289.1 L321.00,289.2 L322.00,290.7 L323.00,288.8 L324.00,288.8 L325.00,287.8 L326.00,288.8 L327.00,287.9 L328.00,287.2 L329.00,287.2 L330.00,286.9 L331.00,287.3 L332.00,287.8 L333.00,287.9 L334.00,287.7 L335.00,286.7 L336.00,287.9 L337.00,287.2 L338.00,285.4 L339.00,287.3 L340.00,286.8 L341.00,285.2 L342.00,285.7 L343.00,286.1 L344.00,285.2 L345.00,285.0 L346.00,283.5 L347.00,282.8 L348.00,282.2 L349.00,282.9 L350.00,282.6 L351.00,281.8 L352.00,282.2 L353.00,281.1 L354.00,281.2 L355.00,281.2 L356.00,279.2 L357.00,280.3 L358.00,279.7 L359.00,278.4 L360.00,277.6 L361.00,277.5 L362.00,276.5 L363.00,274.6 L364.00,275.4 L365.00,274.4 L366.00,272.7 L367.00,273.2 L368.00,271.2 L369.00,268.4 L370.00,265.9 L371.00,265.1 L372.00,263.7 L373.00,258.5 L374.00,257.0 L375.00,252.9" fill="none" stroke="#50ff00" stroke-width="1.6" opacity=".9"/>
<path d="M412.97,254.5 L414.97,255.6 L416.97,256.9 L418.97,261.1 L420.97,262.7 L422.97,264.9 L424.97,264.9 L426.97,267.3 L428.97,267.2 L430.97,269.5 L432.97,269.6 L434.97,271.4 L436.97,272.0 L438.97,276.2 L440.97,278.3 L442.97,280.1 L444.97,280.3 L446.97,284.0 L448.97,283.8 L450.97,285.0 L452.97,285.8 L454.97,287.3 L456.97,288.0 L458.97,289.8 L460.97,290.7 L462.97,293.7 L464.97,294.5 L466.97,297.1 L468.97,298.1 L470.97,299.8 L472.97,301.4 L474.97,301.4 L476.97,304.5 L478.97,304.1 L480.97,304.2 L482.97,306.8 L484.97,306.6 L486.97,307.1 L488.97,306.9 L490.97,308.0 L492.97,309.8 L494.97,312.0 L496.97,311.5 L498.97,311.5 L500.97,312.5 L502.97,312.6 L504.97,313.4 L506.97,313.8 L508.97,312.6 L510.97,312.3 L512.97,311.2 L514.97,313.7 L516.97,312.0 L518.97,312.9 L520.97,310.9 L522.97,311.1 L524.97,312.5 L526.97,312.1 L528.97,309.5 L530.97,311.8 L532.97,310.4 L534.97,309.2 L536.97,309.8 L538.97,309.5 L540.97,306.0 L542.97,306.4 L544.97,306.8 L546.97,305.1 L548.97,303.8 L550.97,301.8 L552.97,301.8 L554.97,302.6 L556.97,300.6 L558.97,301.6 L560.97,299.3 L562.97,299.8 L564.97,298.5 L566.97,298.2 L568.97,296.3 L570.97,297.3 L572.97,296.1 L574.97,293.2 L576.97,294.5 L578.97,291.7 L580.97,291.6 L582.97,290.8 L584.97,291.1 L586.97,289.1 L588.97,288.6 L590.97,288.7 L592.97,287.9 L594.97,285.9 L596.97,286.2 L598.97,284.6 L600.97,281.8 L602.97,281.1 L604.97,281.0 L606.97,279.6 L608.97,280.1 L610.97,277.4 L612.97,276.2 L614.97,274.6 L616.97,272.8 L618.97,273.8 L620.97,271.9 L622.97,271.2 L624.97,267.9 L626.97,268.8" fill="none" stroke="#00f840" stroke-width="8" opacity=".75" filter="url(#blur1)"/>
<path d="M412.97,251.4 L413.97,251.2 L414.97,251.3 L415.97,252.2 L416.97,254.7 L417.97,255.6 L418.97,255.0 L419.97,257.1 L420.97,256.3 L421.97,258.1 L422.97,258.6 L423.97,261.3 L424.97,261.1 L425.97,262.8 L426.97,261.9 L427.97,264.7 L428.97,264.9 L429.97,264.4 L430.97,266.3 L431.97,265.1 L432.97,265.8 L433.97,265.7 L434.97,268.6 L435.97,269.4 L436.97,268.5 L437.97,271.0 L438.97,270.5 L439.97,271.5 L440.97,273.6 L441.97,274.3 L442.97,275.2 L443.97,275.6 L444.97,275.9 L445.97,277.9 L446.97,277.4 L447.97,278.3 L448.97,278.7 L449.97,280.1 L450.97,282.2 L451.97,281.4 L452.97,281.6 L453.97,283.6 L454.97,282.9 L455.97,284.2 L456.97,284.9 L457.97,285.2 L458.97,286.2 L459.97,286.1 L460.97,287.2 L461.97,286.8 L462.97,287.3 L463.97,289.1 L464.97,289.4 L465.97,290.5 L466.97,292.1 L467.97,293.4 L468.97,293.0 L469.97,294.7 L470.97,293.6 L471.97,294.6 L472.97,297.4 L473.97,298.0 L474.97,298.5 L475.97,297.7 L476.97,299.9 L477.97,299.6 L478.97,299.1 L479.97,299.3 L480.97,299.8 L481.97,301.0 L482.97,299.8 L483.97,301.8 L484.97,301.3 L485.97,302.8 L486.97,301.5 L487.97,302.8 L488.97,303.8 L489.97,303.2 L490.97,304.2 L491.97,304.5 L492.97,305.0 L493.97,305.6 L494.97,307.2 L495.97,306.5 L496.97,307.8 L497.97,306.4 L498.97,307.8 L499.97,308.1 L500.97,308.5 L501.97,307.7 L502.97,309.3 L503.97,307.9 L504.97,308.5 L505.97,307.9 L506.97,308.7 L507.97,307.6 L508.97,309.2 L509.97,307.7 L510.97,309.3 L511.97,308.1 L512.97,309.1 L513.97,308.9 L514.97,308.6 L515.97,308.4 L516.97,307.4 L517.97,308.3 L518.97,306.7 L519.97,307.3 L520.97,306.3 L521.97,307.6 L522.97,305.9 L523.97,307.5 L524.97,307.6 L525.97,306.9 L526.97,306.9 L527.97,306.4 L528.97,306.3 L529.97,306.3 L530.97,305.1 L531.97,306.0 L532.97,306.4 L533.97,305.4 L534.97,305.1 L535.97,303.9 L536.97,303.4 L537.97,304.1 L538.97,304.0 L539.97,303.8 L540.97,302.8 L541.97,302.4 L542.97,303.0 L543.97,302.4 L544.97,301.7 L545.97,300.0 L546.97,300.3 L547.97,300.9 L548.97,300.2 L549.97,298.1 L550.97,299.4 L551.97,299.4 L552.97,299.0 L553.97,298.0 L554.97,297.0 L555.97,297.6 L556.97,296.2 L557.97,296.2 L558.97,297.2 L559.97,295.6 L560.97,295.1 L561.97,296.0 L562.97,296.2 L563.97,295.0 L564.97,293.4 L565.97,294.2 L566.97,294.2 L567.97,294.2 L568.97,292.2 L569.97,291.9 L570.97,292.1 L571.97,291.8 L572.97,290.9 L573.97,290.3 L574.97,289.1 L575.97,288.0 L576.97,289.0 L577.97,288.3 L578.97,287.0 L579.97,287.9 L580.97,286.0 L581.97,285.9 L582.97,286.0 L583.97,286.6 L584.97,286.5 L585.97,285.0 L586.97,284.9 L587.97,284.2 L588.97,285.6 L589.97,284.0 L590.97,282.6 L591.97,283.3 L592.97,283.0 L593.97,283.1 L594.97,280.9 L595.97,279.8 L596.97,280.1 L597.97,278.7 L598.97,278.1 L599.97,279.8 L600.97,277.5 L601.97,277.8 L602.97,278.1 L603.97,276.5 L604.97,275.5 L605.97,277.0 L606.97,274.8 L607.97,276.2 L608.97,275.7 L609.97,274.0 L610.97,273.4 L611.97,273.0 L612.97,273.2 L613.97,272.5 L614.97,271.4 L615.97,271.2 L616.97,269.1 L617.97,270.1 L618.97,269.1 L619.97,266.9 L620.97,267.3 L621.97,266.7 L622.97,266.4 L623.97,264.3 L624.97,264.7 L625.97,264.4 L626.97,263.5" fill="none" stroke="#50ff00" stroke-width="1.6" opacity=".9"/>
<rect x="290.5" y="295.5" width="2" height="1.5" fill="#e0ff00"/><rect x="287.3" y="295.6" width="2" height="1.5" fill="#e0ff00"/><rect x="290.2" y="293.7" width="2" height="1.5" fill="#e0ff00"/><rect x="321.9" y="290.7" width="2" height="1.5" fill="#e0ff00"/><rect x="335.5" y="286.6" width="2" height="1.5" fill="#e0ff00"/><rect x="309.8" y="290.4" width="2" height="1.5" fill="#e0ff00"/><rect x="311.5" y="292.7" width="2" height="1.5" fill="#e0ff00"/><rect x="335.9" y="287.5" width="2" height="1.5" fill="#e0ff00"/><rect x="317.2" y="290.5" width="2" height="1.5" fill="#e0ff00"/><rect x="289.3" y="294.4" width="2" height="1.5" fill="#e0ff00"/><rect x="344.7" y="284.2" width="2" height="1.5" fill="#e0ff00"/><rect x="362.0" y="277.2" width="2" height="1.5" fill="#e0ff00"/><rect x="351.5" y="280.5" width="2" height="1.5" fill="#e0ff00"/><rect x="327.6" y="286.6" width="2" height="1.5" fill="#e0ff00"/><rect x="343.6" y="286.0" width="2" height="1.5" fill="#e0ff00"/><rect x="335.1" y="288.6" width="2" height="1.5" fill="#e0ff00"/><rect x="335.7" y="286.8" width="2" height="1.5" fill="#e0ff00"/><rect x="358.9" y="280.0" width="2" height="1.5" fill="#e0ff00"/><rect x="326.3" y="289.3" width="2" height="1.5" fill="#e0ff00"/><rect x="289.4" y="296.3" width="2" height="1.5" fill="#e0ff00"/><rect x="341.7" y="287.6" width="2" height="1.5" fill="#e0ff00"/><rect x="357.3" y="278.3" width="2" height="1.5" fill="#e0ff00"/><rect x="318.4" y="290.7" width="2" height="1.5" fill="#e0ff00"/><rect x="325.2" y="287.5" width="2" height="1.5" fill="#e0ff00"/><rect x="333.0" y="289.0" width="2" height="1.5" fill="#e0ff00"/><rect x="357.1" y="280.8" width="2" height="1.5" fill="#e0ff00"/><rect x="362.9" y="277.6" width="2" height="1.5" fill="#e0ff00"/><rect x="299.7" y="292.8" width="2" height="1.5" fill="#e0ff00"/><rect x="327.2" y="288.9" width="2" height="1.5" fill="#e0ff00"/><rect x="345.6" y="284.2" width="2" height="1.5" fill="#e0ff00"/><rect x="339.1" y="287.1" width="2" height="1.5" fill="#e0ff00"/><rect x="288.8" y="297.2" width="2" height="1.5" fill="#e0ff00"/><rect x="353.6" y="282.7" width="2" height="1.5" fill="#e0ff00"/><rect x="355.2" y="280.1" width="2" height="1.5" fill="#e0ff00"/><rect x="289.6" y="293.8" width="2" height="1.5" fill="#e0ff00"/><rect x="288.7" y="293.6" width="2" height="1.5" fill="#e0ff00"/><rect x="286.3" y="297.5" width="2" height="1.5" fill="#e0ff00"/><rect x="338.8" y="285.1" width="2" height="1.5" fill="#e0ff00"/><rect x="325.6" y="288.7" width="2" height="1.5" fill="#e0ff00"/><rect x="291.7" y="293.6" width="2" height="1.5" fill="#e0ff00"/>
<path d="M556,299 L562,297" stroke="#e8ff00" stroke-width="2.5"/>
<path d="M399,377 L399,300 L405,284 L437,377z" fill="#30f838" opacity=".5"/>
<path d="M399,377 L399,340 L425,340 L437,377z" fill="#90ff10" opacity=".45"/>
<path d="M410.6,304.6V377 M427.2,348.5V377 M399.8,342.3V377 M417.0,318.8V377 M417.5,320.2V377 M417.0,343.8V377 M428.4,351.9V377 M407.9,310.2V377 M404.7,332.5V377 M417.1,332.8V377 M410.2,302.3V377 M426.6,346.7V377 M428.0,350.8V377 M426.8,347.4V377 M406.7,318.5V377 M411.1,301.7V377 M399.9,305.4V377 M407.8,328.1V377 M431.5,361.1V377 M430.9,359.2V377 M431.5,360.9V377 M406.5,302.5V377 M405.7,301.2V377 M420.2,339.5V377 M427.6,349.6V377 M421.2,334.0V377 M401.9,326.3V377 M429.9,356.5V377" stroke="#60ff10" stroke-width="1" opacity=".6"/>
<path d="M399,346.5 H436 M399,355.5 H437" stroke="#e0ff00" stroke-width="1.8" opacity=".85"/>
<rect x="425.5" y="323.0" width="2.5" height="2" fill="#e8ff00" opacity=".9"/><rect x="406.1" y="330.2" width="2.5" height="2" fill="#e8ff00" opacity=".9"/><rect x="411.3" y="330.4" width="2.5" height="2" fill="#e8ff00" opacity=".9"/><rect x="433.0" y="321.1" width="2.5" height="2" fill="#e8ff00" opacity=".9"/><rect x="413.6" y="333.8" width="2.5" height="2" fill="#e8ff00" opacity=".9"/><rect x="424.6" y="344.5" width="2.5" height="2" fill="#e8ff00" opacity=".9"/><rect x="404.3" y="343.7" width="2.5" height="2" fill="#e8ff00" opacity=".9"/><rect x="430.8" y="368.6" width="2.5" height="2" fill="#e8ff00" opacity=".9"/><rect x="405.0" y="369.4" width="2.5" height="2" fill="#e8ff00" opacity=".9"/><rect x="433.3" y="363.0" width="2.5" height="2" fill="#e8ff00" opacity=".9"/><rect x="411.9" y="358.8" width="2.5" height="2" fill="#e8ff00" opacity=".9"/><rect x="404.5" y="338.5" width="2.5" height="2" fill="#e8ff00" opacity=".9"/><rect x="433.0" y="362.7" width="2.5" height="2" fill="#e8ff00" opacity=".9"/><rect x="417.9" y="373.5" width="2.5" height="2" fill="#e8ff00" opacity=".9"/><rect x="414.7" y="371.1" width="2.5" height="2" fill="#e8ff00" opacity=".9"/><rect x="428.1" y="346.0" width="2.5" height="2" fill="#e8ff00" opacity=".9"/><rect x="408.6" y="349.1" width="2.5" height="2" fill="#e8ff00" opacity=".9"/><rect x="408.2" y="360.3" width="2.5" height="2" fill="#e8ff00" opacity=".9"/><rect x="408.8" y="353.9" width="2.5" height="2" fill="#e8ff00" opacity=".9"/><rect x="404.5" y="372.6" width="2.5" height="2" fill="#e8ff00" opacity=".9"/><rect x="412.0" y="355.4" width="2.5" height="2" fill="#e8ff00" opacity=".9"/><rect x="419.8" y="372.4" width="2.5" height="2" fill="#e8ff00" opacity=".9"/>
<path d="M362.5,377 L372,345 M378,350V377 M385,350V377" stroke="#30f838" stroke-width="1.5" opacity=".6"/>
<rect x="371" y="344.5" width="8.5" height="3.5" fill="#f8d800"/>
<path d="M380,347 H395 M394.6,345 V358" stroke="#30f838" stroke-width="1.5" opacity=".8"/>
<path d="M479,258V285 M487,262V285 M521,262V292 M553,258V290 M560,262V295 M568,258V292 M540,262V292" stroke="#20f840" stroke-width="3" opacity=".4"/>
<path d="M536,263V272" stroke="#d0ff00" stroke-width="2.2"/></g><g id="paxes">
<rect x="283.5" y="246.5" width="344" height="131.5" fill="none" stroke="#000" stroke-width="1"/>
<path d="M275,376.5H283 M279,354.5H283 M279,341.5H283 M279,331.5H283 M279,324.5H283 M279,318.5H283 M279,313.5H283 M279,309.5H283 M279,305.5H283 M275,302.5H283 M279,279.5H283 M279,266.5H283 M279,257.5H283 M279,250.5H283" stroke="#222" stroke-width="1"/>
<path d="M284.5,378V386 M284.5,557V565 M312.5,378V382 M312.5,557V561 M341.5,378V382 M341.5,557V561 M369.5,378V386 M369.5,557V565 M398.5,378V382 M398.5,557V561 M427.5,378V382 M427.5,557V561 M455.5,378V386 M455.5,557V565 M484.5,378V382 M484.5,557V561 M512.5,378V382 M512.5,557V561 M541.5,378V386 M541.5,557V565 M570.5,378V382 M570.5,557V561 M598.5,378V382 M598.5,557V561 M627.5,378V386 M627.5,557V565" stroke="#222" stroke-width="1"/>
<path d="M651,379.5H660 M651,369.5H655.5 M651,359.5H660 M651,349.5H655.5 M651,339.5H660 M651,330.5H655.5 M651,320.5H660 M651,310.5H655.5 M651,300.5H660 M651,290.5H655.5 M651,281.5H660 M651,271.5H655.5 M651,261.5H660 M651,251.5H655.5" stroke="#222" stroke-width="1"/>
<text x="284.2" y="401.8" class="pt" text-anchor="middle" textLength="34.3" lengthAdjust="spacingAndGlyphs" style="white-space:pre">12:00</text>
<text x="369.9" y="401.8" class="pt" text-anchor="middle" textLength="34.3" lengthAdjust="spacingAndGlyphs" style="white-space:pre">15:00</text>
<text x="455.7" y="401.8" class="pt" text-anchor="middle" textLength="34.3" lengthAdjust="spacingAndGlyphs" style="white-space:pre">18:00</text>
<text x="541.5" y="401.8" class="pt" text-anchor="middle" textLength="34.3" lengthAdjust="spacingAndGlyphs" style="white-space:pre">21:00</text>
<text x="627.2" y="401.8" class="pt" text-anchor="middle" textLength="34.3" lengthAdjust="spacingAndGlyphs" style="white-space:pre">00:00</text>
<text x="610.5" y="412.8" class="pt" textLength="68.2" lengthAdjust="spacingAndGlyphs" style="white-space:pre">2012-12-06</text>
<text x="249.5" y="309.0" class="pt" textLength="15.7" lengthAdjust="spacingAndGlyphs" style="white-space:pre">10</text><text x="264.5" y="303.0" class="pt" textLength="8.4" lengthAdjust="spacingAndGlyphs" style="white-space:pre">5</text>
<text x="249.5" y="383.4" class="pt" textLength="15.7" lengthAdjust="spacingAndGlyphs" style="white-space:pre">10</text><text x="264.5" y="377.4" class="pt" textLength="8.4" lengthAdjust="spacingAndGlyphs" style="white-space:pre">4</text>
<g transform="translate(241.4,312.5) rotate(-90)"><text x="0.0" y="0.0" class="pt" text-anchor="middle" textLength="15.8" lengthAdjust="spacingAndGlyphs" style="white-space:pre">Hz</text></g>
<text x="662.5" y="385.3" class="pt" textLength="15.7" lengthAdjust="spacingAndGlyphs" style="white-space:pre">10</text><text x="677.5" y="379.8" class="pt" textLength="19.9" lengthAdjust="spacingAndGlyphs" style="white-space:pre">-22</text>
<text x="662.5" y="365.7" class="pt" textLength="15.7" lengthAdjust="spacingAndGlyphs" style="white-space:pre">10</text><text x="677.5" y="360.2" class="pt" textLength="19.9" lengthAdjust="spacingAndGlyphs" style="white-space:pre">-20</text>
<text x="662.5" y="346.1" class="pt" textLength="15.7" lengthAdjust="spacingAndGlyphs" style="white-space:pre">10</text><text x="677.5" y="340.6" class="pt" textLength="19.9" lengthAdjust="spacingAndGlyphs" style="white-space:pre">-18</text>
<text x="662.5" y="326.5" class="pt" textLength="15.7" lengthAdjust="spacingAndGlyphs" style="white-space:pre">10</text><text x="677.5" y="321.0" class="pt" textLength="19.9" lengthAdjust="spacingAndGlyphs" style="white-space:pre">-16</text>
<text x="662.5" y="306.9" class="pt" textLength="15.7" lengthAdjust="spacingAndGlyphs" style="white-space:pre">10</text><text x="677.5" y="301.4" class="pt" textLength="19.9" lengthAdjust="spacingAndGlyphs" style="white-space:pre">-14</text>
<text x="662.5" y="287.3" class="pt" textLength="15.7" lengthAdjust="spacingAndGlyphs" style="white-space:pre">10</text><text x="677.5" y="281.8" class="pt" textLength="19.9" lengthAdjust="spacingAndGlyphs" style="white-space:pre">-12</text>
<text x="662.5" y="267.7" class="pt" textLength="15.7" lengthAdjust="spacingAndGlyphs" style="white-space:pre">10</text><text x="677.5" y="262.2" class="pt" textLength="19.9" lengthAdjust="spacingAndGlyphs" style="white-space:pre">-10</text>
<g transform="translate(712.5,312) rotate(-90)"><text x="0.0" y="0.0" class="pt" text-anchor="middle" textLength="76.8" lengthAdjust="spacingAndGlyphs" style="white-space:pre">V^2/m^2/Hz</text></g>
<text x="456.0" y="405.4" class="pt" text-anchor="middle" textLength="233.1" lengthAdjust="spacingAndGlyphs" style="white-space:pre">RBSP-A/ect-hope-L3  HOPE e Tperp/Tpar</text>
<path d="M283.5,557 V424.5 H627.5 V557" fill="none" stroke="#7a7a7a" stroke-width="1"/><path d="M627.5,440V557" stroke="#555" stroke-width="1"/><path d="M283.5,557.5 H628 M283.5,424.5 V557" stroke="#333" stroke-width="1"/>
<path d="M279,556.5H283 M275,541.5H283 M279,526.5H283 M275,513.5H283 M279,501.5H283 M275,489.5H283 M279,479.5H283 M275,469.5H283 M279,459.5H283 M275,450.5H283 M279,441.5H283 M275,433.5H283 M279,425.5H283" stroke="#222" stroke-width="1"/>
<text x="271.5" y="545.6" class="pt" text-anchor="end" textLength="19.4" lengthAdjust="spacingAndGlyphs" style="white-space:pre">1.2</text>
<text x="271.5" y="518.2" class="pt" text-anchor="end" textLength="19.4" lengthAdjust="spacingAndGlyphs" style="white-space:pre">1.4</text>
<text x="271.5" y="494.5" class="pt" text-anchor="end" textLength="19.4" lengthAdjust="spacingAndGlyphs" style="white-space:pre">1.6</text>
<text x="271.5" y="473.5" class="pt" text-anchor="end" textLength="19.4" lengthAdjust="spacingAndGlyphs" style="white-space:pre">1.8</text>
<text x="271.5" y="454.8" class="pt" text-anchor="end" textLength="19.4" lengthAdjust="spacingAndGlyphs" style="white-space:pre">2.0</text>
<text x="271.5" y="437.9" class="pt" text-anchor="end" textLength="19.4" lengthAdjust="spacingAndGlyphs" style="white-space:pre">2.2</text>
<g transform="translate(245.2,491) rotate(-90)"><text x="0.0" y="0.0" class="pt" text-anchor="middle" textLength="75.5" lengthAdjust="spacingAndGlyphs" style="white-space:pre">e Tperp/Tpar</text></g>
<text x="301.6" y="581.1" class="pt" text-anchor="end" textLength="34.3" lengthAdjust="spacingAndGlyphs" style="white-space:pre">12:00</text>
<text x="387.4" y="581.1" class="pt" text-anchor="end" textLength="34.3" lengthAdjust="spacingAndGlyphs" style="white-space:pre">15:00</text>
<text x="473.1" y="581.1" class="pt" text-anchor="end" textLength="34.3" lengthAdjust="spacingAndGlyphs" style="white-space:pre">18:00</text>
<text x="558.9" y="581.1" class="pt" text-anchor="end" textLength="34.3" lengthAdjust="spacingAndGlyphs" style="white-space:pre">21:00</text>
<text x="644.6" y="581.1" class="pt" text-anchor="end" textLength="34.3" lengthAdjust="spacingAndGlyphs" style="white-space:pre">00:00</text>
<text x="238.0" y="596.0" class="pt" textLength="9.0" lengthAdjust="spacingAndGlyphs" style="white-space:pre">R</text><text x="246.0" y="599.0" class="pts" textLength="5.4" lengthAdjust="spacingAndGlyphs" style="white-space:pre">E</text>
<text x="301.6" y="596.0" class="pt" text-anchor="end" textLength="34.1" lengthAdjust="spacingAndGlyphs" style="white-space:pre">5.726</text>
<text x="387.4" y="596.0" class="pt" text-anchor="end" textLength="34.1" lengthAdjust="spacingAndGlyphs" style="white-space:pre">2.912</text>
<text x="473.1" y="596.0" class="pt" text-anchor="end" textLength="34.1" lengthAdjust="spacingAndGlyphs" style="white-space:pre">4.476</text>
<text x="558.9" y="596.0" class="pt" text-anchor="end" textLength="34.1" lengthAdjust="spacingAndGlyphs" style="white-space:pre">5.722</text>
<text x="644.6" y="596.0" class="pt" text-anchor="end" textLength="34.1" lengthAdjust="spacingAndGlyphs" style="white-space:pre">2.872</text>
<text x="251.3" y="610.5" class="pt" text-anchor="end" textLength="29.0" lengthAdjust="spacingAndGlyphs" style="white-space:pre">MLat</text>
<text x="301.6" y="610.5" class="pt" text-anchor="end" textLength="38.3" lengthAdjust="spacingAndGlyphs" style="white-space:pre">-1.522</text>
<text x="387.4" y="610.5" class="pt" text-anchor="end" textLength="34.1" lengthAdjust="spacingAndGlyphs" style="white-space:pre">3.177</text>
<text x="473.1" y="610.5" class="pt" text-anchor="end" textLength="45.6" lengthAdjust="spacingAndGlyphs" style="white-space:pre">-17.370</text>
<text x="558.9" y="610.5" class="pt" text-anchor="end" textLength="45.6" lengthAdjust="spacingAndGlyphs" style="white-space:pre">-19.390</text>
<text x="644.6" y="610.5" class="pt" text-anchor="end" textLength="45.6" lengthAdjust="spacingAndGlyphs" style="white-space:pre">-14.720</text>
<text x="251.3" y="625.2" class="pt" text-anchor="end" textLength="22.9" lengthAdjust="spacingAndGlyphs" style="white-space:pre">MLT</text>
<text x="301.6" y="625.2" class="pt" text-anchor="end" textLength="34.1" lengthAdjust="spacingAndGlyphs" style="white-space:pre">5.395</text>
<text x="387.4" y="625.2" class="pt" text-anchor="end" textLength="34.1" lengthAdjust="spacingAndGlyphs" style="white-space:pre">8.708</text>
<text x="473.1" y="625.2" class="pt" text-anchor="end" textLength="34.1" lengthAdjust="spacingAndGlyphs" style="white-space:pre">2.699</text>
<text x="558.9" y="625.2" class="pt" text-anchor="end" textLength="34.1" lengthAdjust="spacingAndGlyphs" style="white-space:pre">4.950</text>
<text x="644.6" y="625.2" class="pt" text-anchor="end" textLength="34.1" lengthAdjust="spacingAndGlyphs" style="white-space:pre">8.416</text>
<text x="251.3" y="639.7" class="pt" text-anchor="end" textLength="7.4" lengthAdjust="spacingAndGlyphs" style="white-space:pre">L</text>
<text x="301.6" y="639.7" class="pt" text-anchor="end" textLength="34.1" lengthAdjust="spacingAndGlyphs" style="white-space:pre">5.731</text>
<text x="387.4" y="639.7" class="pt" text-anchor="end" textLength="34.1" lengthAdjust="spacingAndGlyphs" style="white-space:pre">2.921</text>
<text x="473.1" y="639.7" class="pt" text-anchor="end" textLength="34.1" lengthAdjust="spacingAndGlyphs" style="white-space:pre">4.914</text>
<text x="558.9" y="639.7" class="pt" text-anchor="end" textLength="34.1" lengthAdjust="spacingAndGlyphs" style="white-space:pre">6.431</text>
<text x="644.6" y="639.7" class="pt" text-anchor="end" textLength="34.1" lengthAdjust="spacingAndGlyphs" style="white-space:pre">3.070</text>
<text x="455.6" y="656.3" class="pt" text-anchor="middle" textLength="192.2" lengthAdjust="spacingAndGlyphs" style="white-space:pre">2012-12-05 (340) 12:00 to 24:00</text>
</g><path d="M407.00,524.8 L407.30,521.9 L407.60,520.0 L407.90,515.4 L408.20,511.4 L408.50,506.9 L408.80,504.4 L409.10,501.8 L409.40,495.9 L409.70,499.2 L410.00,497.6 L410.30,491.0 L410.60,489.4 L410.90,488.9 L411.20,479.9 L411.50,483.9 L411.80,476.7 L412.10,474.2 L412.40,482.7 L412.70,480.7 L413.00,480.5 L413.30,472.5 L413.60,481.4 L413.90,476.8 L414.20,473.3 L414.50,475.8 L414.80,476.4 L415.10,482.9 L415.40,481.5 L415.70,471.5 L416.00,476.2 L416.30,474.8 L416.60,477.0 L416.90,484.5 L417.20,483.5 L417.50,469.2 L417.80,479.5 L418.10,468.1 L418.40,474.1 L418.70,468.6 L419.00,469.8 L419.30,467.3 L419.60,466.3 L419.90,471.1 L420.20,460.9 L420.50,459.0 L420.80,466.9 L421.10,464.5 L421.40,459.7 L421.70,470.3 L422.00,469.1 L422.30,453.2 L422.60,463.3 L422.90,454.3 L423.20,451.5 L423.50,456.0 L423.80,459.2 L424.10,452.3 L424.40,448.6 L424.70,456.5 L425.00,447.8 L425.30,457.3 L425.60,445.9 L425.90,458.0 L426.20,445.8 L426.50,453.8 L426.80,439.7 L427.10,444.8 L427.40,449.1 L427.70,442.8 L428.00,455.5 L428.30,439.7 L428.60,439.1 L428.90,454.0 L429.20,449.1 L429.50,439.2 L429.80,437.2 L430.10,440.3 L430.40,441.6 L430.70,446.6 L431.00,445.6 L431.30,437.1 L431.60,442.3 L431.90,451.9 L432.20,446.5 L432.50,444.3 L432.80,450.4 L433.10,452.0 L433.40,454.1 L433.70,451.1 L434.00,445.9 L434.30,442.7 L434.60,455.8 L434.90,453.7 L435.20,450.7 L435.50,454.9 L435.80,456.4 L436.10,448.1 L436.40,459.3 L436.70,454.5 L437.00,446.7 L437.30,449.5 L437.60,464.3 L437.90,450.1 L438.20,459.0 L438.50,459.6 L438.80,466.5 L439.10,460.2 L439.40,457.9 L439.70,462.4 L440.00,458.8 L440.30,462.4 L440.60,463.9 L440.90,460.3 L441.20,468.6 L441.50,468.3 L441.80,466.7 L442.10,480.1 L442.40,467.7 L442.70,471.7 L443.00,467.7 L443.30,481.5 L443.60,476.2 L443.90,472.7 L444.20,476.4 L444.50,486.9 L444.80,481.3 L445.10,484.9 L445.40,491.4 L445.70,493.1 L446.00,484.4 L446.30,485.4 L446.60,478.4 L446.90,485.2 L447.20,486.3 L447.50,489.5 L447.80,494.8 L448.10,501.1 L448.40,482.1 L448.70,501.3 L449.00,484.6 L449.30,498.2 L449.60,482.5 L449.90,497.5 L450.20,479.1 L450.50,488.9 L450.80,489.5 L451.10,505.2 L451.40,488.9 L451.70,499.5 L452.00,501.4 L452.30,504.7 L452.60,491.5 L452.90,499.8 L453.20,498.1 L453.50,501.3 L453.80,489.9 L454.10,500.6 L454.40,500.0 L454.70,501.5 L455.00,503.0 L455.30,490.6 L455.60,501.9 L455.90,506.9 L456.20,500.1 L456.50,522.4 L456.80,507.0 L457.10,492.4 L457.40,508.8 L457.70,500.5 L458.00,505.4 L458.30,522.4 L458.60,511.4 L458.90,502.3 L459.20,503.5 L459.50,508.0 L459.80,500.4 L460.10,506.3 L460.40,517.3 L460.70,517.9 L461.00,509.9 L461.30,510.5 L461.60,514.9 L461.90,506.8 L462.20,506.4 L462.50,515.8 L462.80,500.2 L463.10,523.5 L463.40,501.1 L463.70,490.8 L464.00,525.7 L464.30,518.8 L464.60,526.1 L464.90,518.2 L465.20,520.7 L465.50,520.5 L465.80,520.4 L466.10,528.7 L466.40,501.1 L466.70,524.6 L467.00,521.7 L467.30,526.9 L467.60,519.9 L467.90,512.9 L468.20,513.9 L468.50,523.7 L468.80,507.3 L469.10,498.0 L469.40,530.2 L469.70,533.9 L470.00,508.0 L470.30,525.4 L470.60,537.3 L470.90,519.3 L471.20,528.4 L471.50,507.2 L471.80,510.4 L472.10,514.3 L472.40,513.6 L472.70,507.4 L473.00,533.0 L473.30,538.7 L473.60,513.5 L473.90,533.5 L474.20,539.0 L474.50,531.3 L474.80,526.4 L475.10,520.3 L475.40,539.2 L475.70,513.4 L476.00,544.8 L476.30,522.8 L476.60,518.6 L476.90,528.4 L477.20,525.2 L477.50,527.7 L477.80,518.8 L478.10,525.8 L478.40,534.4 L478.70,527.0 L479.00,544.7 L479.30,533.2 L479.60,517.5 L479.90,537.9 L480.20,526.5 L480.50,547.1 L480.80,535.4 L481.10,530.1 L481.40,528.6 L481.70,535.9 L482.00,542.7 L482.30,517.0 L482.60,530.6 L482.90,543.2 L483.20,518.5 L483.50,543.2 L483.80,535.7 L484.10,544.7 L484.40,539.5 L484.70,525.3 L485.00,535.5 L485.30,524.3 L485.60,547.8 L485.90,537.6 L486.20,533.2 L486.50,526.6 L486.80,543.9 L487.10,521.5 L487.40,543.5 L487.70,537.5 L488.00,547.4 L488.30,534.4 L488.60,518.4 L488.90,525.2 L489.20,531.1 L489.50,532.5 L489.80,516.6 L490.10,551.7 L490.40,523.3 L490.70,551.6 L491.00,539.1 L491.30,537.1 L491.60,521.1 L491.90,547.8 L492.20,538.2 L492.50,545.1 L492.80,550.4 L493.10,546.4 L493.40,522.8 L493.70,520.0 L494.00,513.6 L494.30,538.2 L494.60,535.0 L494.90,558.7 L495.20,539.6 L495.50,524.3 L495.80,528.8 L496.10,541.1 L496.40,542.1 L496.70,533.9 L497.00,551.6 L497.30,521.6 L497.60,529.0 L497.90,549.7 L498.20,555.2 L498.50,546.0 L498.80,541.6 L499.10,512.8 L499.40,545.1 L499.70,542.6 L500.00,539.9 L500.30,524.3 L500.60,523.7 L500.90,535.8 L501.20,522.6 L501.50,546.4 L501.80,548.5 L502.10,521.8 L502.40,527.6 L502.70,548.2 L503.00,524.8 L503.30,523.4 L503.60,547.2 L503.90,534.6 L504.20,546.4 L504.50,542.9 L504.80,520.7 L505.10,542.6 L505.40,524.3 L505.70,528.1 L506.00,524.5 L506.30,546.3 L506.60,524.7 L506.90,529.5 L507.20,522.9 L507.50,521.0 L507.80,540.5 L508.10,534.3 L508.40,527.3 L508.70,530.6 L509.00,550.8 L509.30,522.1 L509.60,556.2 L509.90,542.0 L510.20,560.5 L510.50,544.3 L510.80,515.3 L511.10,545.0 L511.40,524.6 L511.70,547.2 L512.00,538.1 L512.30,524.2 L512.60,545.3 L512.90,511.8 L513.20,537.3 L513.50,526.9 L513.80,537.2 L514.10,543.3 L514.40,518.1 L514.70,540.6 L515.00,544.9 L515.30,542.8 L515.60,543.7 L515.90,532.9 L516.20,545.6 L516.50,544.3 L516.80,523.6 L517.10,526.2 L517.40,529.1 L517.70,518.1 L518.00,531.3 L518.30,521.5 L518.60,542.4 L518.90,527.5 L519.20,529.3 L519.50,519.6 L519.80,546.4 L520.10,533.1 L520.40,534.6 L520.70,546.7 L521.00,516.4 L521.30,525.1 L521.60,508.5 L521.90,542.6 L522.20,518.0 L522.50,534.7 L522.80,542.7 L523.10,543.4 L523.40,509.1 L523.70,532.0 L524.00,520.9 L524.30,527.3 L524.60,534.9 L524.90,521.5 L525.20,544.6 L525.50,541.8 L525.80,528.7 L526.10,542.2 L526.40,528.9 L526.70,540.2 L527.00,524.2 L527.30,530.0 L527.60,540.9 L527.90,541.1 L528.20,518.6 L528.50,545.2 L528.80,524.4 L529.10,535.6 L529.40,533.2 L529.70,529.6 L530.00,507.9 L530.30,545.1 L530.60,544.1 L530.90,540.4 L531.20,550.2 L531.50,535.4 L531.80,536.4 L532.10,532.5 L532.40,534.7 L532.70,531.8 L533.00,544.0 L533.30,525.6 L533.60,520.4 L533.90,543.9 L534.20,524.5 L534.50,532.6 L534.80,513.1 L535.10,525.1 L535.40,524.9 L535.70,519.2 L536.00,539.9 L536.30,532.3 L536.60,522.0 L536.90,529.0 L537.20,532.9 L537.50,524.5 L537.80,521.8 L538.10,526.1 L538.40,515.8 L538.70,538.6 L539.00,530.1 L539.30,522.6 L539.60,522.7 L539.90,512.4 L540.20,537.7 L540.50,515.9 L540.80,525.7 L541.10,516.8 L541.40,539.1 L541.70,517.7 L542.00,522.7 L542.30,529.5 L542.60,534.8 L542.90,532.4 L543.20,532.9 L543.50,533.4 L543.80,544.2 L544.10,542.0 L544.40,532.4 L544.70,525.3 L545.00,527.0 L545.30,532.2 L545.60,527.4 L545.90,523.2 L546.20,529.8 L546.50,521.1 L546.80,520.7 L547.10,530.5 L547.40,523.0 L547.70,514.8 L548.00,513.5 L548.30,525.6 L548.60,532.2 L548.90,530.0 L549.20,532.6 L549.50,519.1 L549.80,500.2 L550.10,522.0 L550.40,530.4 L550.70,520.9 L551.00,520.1 L551.30,524.0 L551.60,515.9 L551.90,515.6 L552.20,523.3 L552.50,509.2 L552.80,516.1 L553.10,519.9 L553.40,528.8 L553.70,515.9 L554.00,528.5 L554.30,517.0 L554.60,508.0 L554.90,526.3 L555.20,515.1 L555.50,523.1 L555.80,520.8 L556.10,521.7 L556.40,504.1 L556.70,511.7 L557.00,498.6 L557.30,513.1 L557.60,506.1 L557.90,514.1 L558.20,506.2 L558.50,503.3 L558.80,495.9 L559.10,514.2 L559.40,512.4 L559.70,505.5 L560.00,499.9 L560.30,505.4 L560.60,506.0 L560.90,489.9 L561.20,513.5 L561.50,488.6 L561.80,503.7 L562.10,505.4 L562.40,486.1 L562.70,508.0 L563.00,506.4 L563.30,493.9 L563.60,491.9 L563.90,502.0 L564.20,498.5 L564.50,489.3 L564.80,500.3 L565.10,496.6 L565.40,488.0 L565.70,506.3 L566.00,492.2 L566.30,502.7 L566.60,497.5 L566.90,494.6 L567.20,488.5 L567.50,498.5 L567.80,489.0 L568.10,492.4 L568.40,482.8 L568.70,486.7 L569.00,502.0 L569.30,493.6 L569.60,491.8 L569.90,487.5 L570.20,483.0 L570.50,488.2 L570.80,485.0 L571.10,482.2 L571.40,495.9 L571.70,485.0 L572.00,484.0 L572.30,505.8 L572.60,492.4 L572.90,505.4 L573.20,491.1 L573.50,492.0 L573.80,488.7 L574.10,495.6 L574.40,494.1 L574.70,500.8 L575.00,505.4 L575.30,494.1 L575.60,499.8 L575.90,511.7 L576.20,498.3 L576.50,493.3 L576.80,496.2 L577.10,500.5 L577.40,495.1 L577.70,492.4 L578.00,495.8 L578.30,491.3 L578.60,497.0 L578.90,492.5 L579.20,495.9 L579.50,491.9 L579.80,495.4 L580.10,509.3 L580.40,508.8 L580.70,492.3 L581.00,490.1 L581.30,504.2 L581.60,498.7 L581.90,505.1 L582.20,508.4 L582.50,505.7 L582.80,492.5 L583.10,506.2 L583.40,484.0 L583.70,488.6 L584.00,497.0 L584.30,491.3 L584.60,506.7 L584.90,509.0 L585.20,506.4 L585.50,500.3 L585.80,496.1 L586.10,509.2 L586.40,493.9 L586.70,509.7 L587.00,492.0 L587.30,493.4 L587.60,495.5 L587.90,511.2 L588.20,506.1 L588.50,507.1 L588.80,493.4 L589.10,511.3 L589.40,510.9 L589.70,506.5 L590.00,504.0 L590.30,491.2 L590.60,499.3 L590.90,516.8 L591.20,510.5 L591.50,505.0 L591.80,495.2 L592.10,510.6 L592.40,501.1 L592.70,490.3 L593.00,498.0 L593.30,492.7 L593.60,504.2 L593.90,493.8 L594.20,499.8 L594.50,509.0 L594.80,494.9 L595.10,491.3 L595.40,495.5 L595.70,500.1 L596.00,491.7 L596.30,501.0 L596.60,504.6 L596.90,490.1 L597.20,495.3 L597.50,488.4 L597.80,491.2 L598.10,495.7 L598.40,493.5 L598.70,492.0 L599.00,480.8 L599.30,507.4 L599.60,487.1 L599.90,506.5 L600.20,487.0 L600.50,492.9 L600.80,496.7 L601.10,504.0 L601.40,497.3 L601.70,497.5 L602.00,484.4 L602.30,483.2 L602.60,500.8 L602.90,486.2 L603.20,500.5 L603.50,485.4 L603.80,499.7 L604.10,485.8 L604.40,499.3 L604.70,489.1 L605.00,488.7 L605.30,481.3 L605.60,492.1 L605.90,497.1 L606.20,498.4 L606.50,488.5 L606.80,480.1 L607.10,490.2 L607.40,493.5 L607.70,484.1 L608.00,468.6 L608.30,481.3 L608.60,491.6 L608.90,489.9 L609.20,487.9 L609.50,475.3 L609.80,480.0 L610.10,475.1 L610.40,482.1 L610.70,493.9 L611.00,472.2 L611.30,478.0 L611.60,463.7 L611.90,471.6 L612.20,486.9 L612.50,484.1 L612.80,486.1 L613.10,487.3 L613.40,478.5 L613.70,469.0 L614.00,484.3 L614.30,476.5 L614.60,468.7 L614.90,452.7 L615.20,475.8 L615.50,461.1 L615.80,467.5 L616.10,468.1 L616.40,471.2 L616.70,453.4 L617.00,478.1 L617.30,459.1 L617.60,457.9 L617.90,468.4 L618.20,467.1 L618.50,460.6 L618.80,457.7 L619.10,470.5 L619.40,463.0 L619.70,465.2 L620.00,467.7 L620.30,476.9 L620.60,478.0 L620.90,456.5 L621.20,461.5 L621.50,476.7 L621.80,476.7 L622.10,476.6 L622.40,458.8 L622.70,453.3 L623.00,457.9 L623.30,469.5 L623.60,473.7 L623.90,473.1 L624.20,474.0 L624.50,455.9 L624.80,459.9 L625.10,467.9 L625.40,454.3 L625.70,469.0 L626.00,472.2 L626.30,467.3" fill="none" stroke="#000" stroke-width="1" clip-path="url(#lineclip)"/><defs><linearGradient id="curg" x1="0" y1="0" x2="1" y2="1"><stop offset="0" stop-color="#fff"/><stop offset="1" stop-color="#dcdcdc"/></linearGradient></defs><path d="M516.5,493 L517,520.5 L525.5,515 L536,534.5 L543,530.5 L532.5,511 L541,508z" fill="url(#curg)" stroke="#141414" stroke-width="3.2" stroke-linejoin="round"/></svg>
<div class="a" style="left:202px;top:666.3px;font-size:13px;color:#333;white-space:nowrap;line-height:13px;letter-spacing:0.67px">2012-12-05 12:00 to 24:00</div>
<div class="a" style="left:15px;top:692px;width:835px;height:26px;border:1px solid #7a8a99;border-right-color:#b8cfe5;border-bottom-color:#b8cfe5;background:#fff"></div>
<div class="a b" style="left:16.8px;top:698px;color:#222;letter-spacing:0.9px">file:/home/jbf/tmp/pngwalk3/product_$Y$m$d_$(H,delta=12).png</div>
<div class="btn" style="left:851px;top:692px;width:20px;height:26px"></div>
<svg class="a" style="left:851px;top:692px" width="20" height="26"><path d="M4.5,11.5H15.5L10,17z" fill="#222"/></svg>
<div class="btn" style="left:877px;top:692px;width:26px;height:26px"></div>
<svg class="a" style="left:877px;top:692px" width="26" height="26"><defs><linearGradient id="plg" x1="0" y1="0" x2="0" y2="1"><stop offset="0" stop-color="#2f9a3c"/><stop offset=".5" stop-color="#6fcf7a"/><stop offset="1" stop-color="#2a8a36"/></linearGradient></defs><path d="M8.5,7.5 L18.5,13 L8.5,18.5z" fill="url(#plg)" stroke="#237a30" stroke-width="1"/></svg>
<div class="btn" style="left:909px;top:692px;width:26px;height:26px"></div>
<svg class="a" style="left:909px;top:692px" width="26" height="27"><path d="M5,10 H10 L11.5,11.5 H17 V19 H5z" fill="#f2c94c" stroke="#c9a020"/><path d="M6,14 H20 L17,19 H5z" fill="#fbe07a" stroke="#c9a020"/><circle cx="17" cy="9" r="4" fill="#bcd8f5" stroke="#7fa6c9"/><path d="M14,12 L9,17" stroke="#e06030" stroke-width="2"/></svg>
<div class="a" style="left:49px;top:731px;width:13px;height:13px;border:1px solid #7a8a99;background:linear-gradient(#fff,#c9dbec)"></div>
<div class="a b" style="left:65.3px;top:731px;letter-spacing:1.11px">Limit range to:</div>
<div class="a" style="left:176px;top:728px;width:236px;height:19px;border:1px solid #b8cfe5;background:#fff"></div>
<div class="a" style="left:424px;top:725px;width:93px;height:25px;border:1px solid #999;background:#eee"></div>
<div class="a b" style="left:440.8px;top:731px;color:#999;letter-spacing:1.3px">Select...</div>
<div class="a" style="left:539px;top:731px;width:13px;height:13px;border:1px solid #7a8a99;background:linear-gradient(#fff,#c9dbec)"></div>
<div class="a b" style="left:556px;top:731px;letter-spacing:1.09px">Show Missing</div>
<div class="btn" style="left:780px;top:730px;width:150px;height:25px"></div>
<div class="a b" style="left:797.2px;top:736px;letter-spacing:1.0px">View in Autoplot</div>
<div class="btn" style="left:139px;top:756px;width:58px;height:22px"></div>
<svg class="a" style="left:156.5px;top:761px;overflow:visible" width="25" height="12"><defs><linearGradient id="navg" x1="0" y1="0" x2="1" y2="0"><stop offset="0" stop-color="#3b5fe0"/><stop offset="1" stop-color="#a9c0f0"/></linearGradient></defs><rect x="0.5" y="0" width="2" height="11" fill="#1a33b8"/><path d="M2.5,5.5 L10.5,0 V11z" fill="url(#navg)" stroke="#1a33b8" stroke-width="1"/><path d="M8.5,5.5 L16.5,0 V11z" fill="url(#navg)" stroke="#1a33b8" stroke-width="1"/><path d="M14.5,5.5 L22.5,0 V11z" fill="url(#navg)" stroke="#1a33b8" stroke-width="1"/></svg>
<div class="btn" style="left:203px;top:756px;width:58px;height:22px"></div>
<svg class="a" style="left:222.0px;top:761px;overflow:visible" width="22" height="12"><defs><linearGradient id="navg" x1="0" y1="0" x2="1" y2="0"><stop offset="0" stop-color="#3b5fe0"/><stop offset="1" stop-color="#a9c0f0"/></linearGradient></defs><path d="M0.5,5.5 L8.5,0 V11z" fill="url(#navg)" stroke="#1a33b8" stroke-width="1"/><path d="M6.5,5.5 L14.5,0 V11z" fill="url(#navg)" stroke="#1a33b8" stroke-width="1"/><path d="M12.5,5.5 L20.5,0 V11z" fill="url(#navg)" stroke="#1a33b8" stroke-width="1"/></svg>
<div class="btn" style="left:267px;top:756px;width:50px;height:22px"></div>
<svg class="a" style="left:285.0px;top:761px;overflow:visible" width="16" height="12"><defs><linearGradient id="navg" x1="0" y1="0" x2="1" y2="0"><stop offset="0" stop-color="#3b5fe0"/><stop offset="1" stop-color="#a9c0f0"/></linearGradient></defs><path d="M0.5,5.5 L8.5,0 V11z" fill="url(#navg)" stroke="#1a33b8" stroke-width="1"/><path d="M6.5,5.5 L14.5,0 V11z" fill="url(#navg)" stroke="#1a33b8" stroke-width="1"/></svg>
<div class="btn" style="left:356px;top:756px;width:50px;height:22px"></div>
<svg class="a" style="left:374.0px;top:761px;overflow:visible" width="16" height="12"><defs><linearGradient id="navg" x1="0" y1="0" x2="1" y2="0"><stop offset="0" stop-color="#3b5fe0"/><stop offset="1" stop-color="#a9c0f0"/></linearGradient></defs><path d="M8.5,5.5 L0.5,0 V11z" fill="url(#navg)" stroke="#1a33b8" stroke-width="1"/><path d="M14.5,5.5 L6.5,0 V11z" fill="url(#navg)" stroke="#1a33b8" stroke-width="1"/></svg>
<div class="btn" style="left:412px;top:756px;width:58px;height:22px"></div>
<svg class="a" style="left:431.0px;top:761px;overflow:visible" width="22" height="12"><defs><linearGradient id="navg" x1="0" y1="0" x2="1" y2="0"><stop offset="0" stop-color="#3b5fe0"/><stop offset="1" stop-color="#a9c0f0"/></linearGradient></defs><path d="M8.5,5.5 L0.5,0 V11z" fill="url(#navg)" stroke="#1a33b8" stroke-width="1"/><path d="M14.5,5.5 L6.5,0 V11z" fill="url(#navg)" stroke="#1a33b8" stroke-width="1"/><path d="M20.5,5.5 L12.5,0 V11z" fill="url(#navg)" stroke="#1a33b8" stroke-width="1"/></svg>
<div class="btn" style="left:476px;top:756px;width:58px;height:22px"></div>
<svg class="a" style="left:493.5px;top:761px;overflow:visible" width="25" height="12"><defs><linearGradient id="navg" x1="0" y1="0" x2="1" y2="0"><stop offset="0" stop-color="#3b5fe0"/><stop offset="1" stop-color="#a9c0f0"/></linearGradient></defs><path d="M8.5,5.5 L0.5,0 V11z" fill="url(#navg)" stroke="#1a33b8" stroke-width="1"/><path d="M14.5,5.5 L6.5,0 V11z" fill="url(#navg)" stroke="#1a33b8" stroke-width="1"/><path d="M20.5,5.5 L12.5,0 V11z" fill="url(#navg)" stroke="#1a33b8" stroke-width="1"/><rect x="20.5" y="0" width="2" height="11" fill="#1a33b8"/></svg>
<div class="a b" style="left:33.9px;top:789.5px;letter-spacing:1.03px">10 of 62 images loaded.</div>
</body></html>
